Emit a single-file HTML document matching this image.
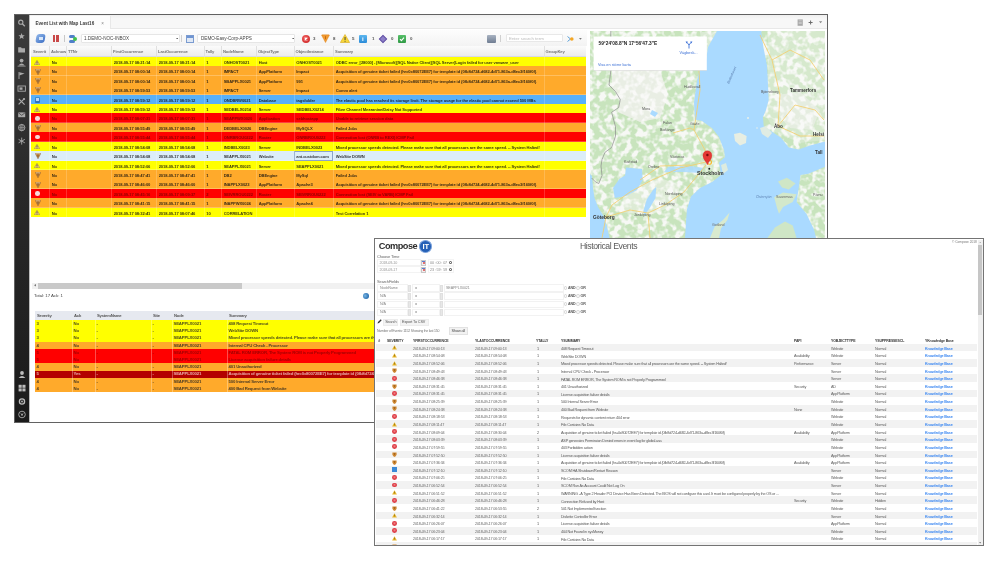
<!DOCTYPE html><html><head><meta charset="utf-8"><title>Event List</title><style>
*{box-sizing:border-box;margin:0;padding:0}
html,body{width:999px;height:564px;overflow:hidden;background:#fff}
body{position:relative;font-family:"Liberation Sans",sans-serif;color:#000}
.ab{position:absolute}
.t{position:absolute;white-space:nowrap;line-height:1}
</style></head><body><div id="root" style="position:absolute;left:0;top:0;width:999px;height:564px;overflow:hidden;will-change:transform;background:#fff">
<div class="ab" style="left:13.8px;top:13.8px;width:814.4px;height:409.4px;border:1.5px solid #626262;background:#fff"></div>
<div class="ab" style="left:15px;top:15px;width:14px;height:407px;background:linear-gradient(#3c3c3c,#2a2a2a 40%,#1b1b1b)"></div>
<div class="ab" style="left:29px;top:15px;width:1px;height:407px;background:#bdbdbd"></div>
<div class="ab" style="left:30px;top:15.3px;width:797px;height:13.4px;background:linear-gradient(#efefef,#f7f7f7 30%);border-bottom:1px solid #e8e8e8"></div>
<div class="ab" style="left:30px;top:16px;width:81px;height:12.5px;background:#fdfdfd;border-right:1px solid #e8e8e8"></div>
<div class="t" style="left:35.5px;top:21.8px;font-size:4.6px;font-weight:bold;color:#3a3a3a">Event List with Map Last16</div>
<div class="t" style="left:101.2px;top:22px;font-size:4.6px;color:#888">×</div>
<svg class="ab" style="left:797px;top:19px" width="28" height="8" viewBox="797 19 28 8"><rect x="797.6" y="19.4" width="5.2" height="6.4" fill="#a8a8a8"/><rect x="798.6" y="20.6" width="3.2" height="0.6" fill="#d8d8d8"/><rect x="798.6" y="22" width="3.2" height="0.6" fill="#d8d8d8"/><rect x="798.6" y="23.4" width="3.2" height="0.6" fill="#d8d8d8"/><path d="M808.6 22.5 H812.6 M810.6 20.5 V24.5" stroke="#6a6a6a" stroke-width="1"/><path d="M819 21.3 H822.2 L820.6 23.2 Z" fill="#8a8a8a"/></svg>
<div class="ab" style="left:30px;top:30px;width:557px;height:16px;background:linear-gradient(#fdfdfd,#f3f3f3)"></div>
<div class="ab" style="left:36px;top:34px;width:9px;height:9px;border-radius:3px;background:linear-gradient(135deg,#8fb6ea,#3d6fc4);transform:skewX(-10deg)"></div>
<div class="ab" style="left:39px;top:36.5px;width:4px;height:3px;background:#d7e6f8"></div>
<div class="ab" style="left:52.5px;top:35px;width:2.6px;height:7px;background:#c94848"></div>
<div class="ab" style="left:56px;top:35px;width:2.6px;height:7px;background:#c94848"></div>
<div class="ab" style="left:64px;top:35px;width:1px;height:7px;background:#c8c8c8"></div>
<div class="ab" style="left:69px;top:35px;width:6px;height:2.5px;border-radius:2px;background:#4f7fc9"></div>
<div class="ab" style="left:69px;top:40px;width:6px;height:2.5px;border-radius:2px;background:#4f7fc9"></div>
<div class="ab" style="left:73px;top:37px;width:4px;height:4px;border-radius:50%;background:#3fc04a"></div>
<div class="ab" style="left:80.5px;top:34px;width:99px;height:9px;background:#fff;border:1px solid #e6e6e6;border-radius:1px"></div>
<div class="t" style="left:84px;top:36.6px;font-size:4.6px;color:#444">1.DEMO-NOC-INBOX</div>
<svg class="ab" style="left:175.5px;top:37.8px" width="2.6" height="1.6" viewBox="0 0 2.6 1.6"><path d="M0 0 H2.6 L1.3 1.6 Z" fill="#666"/></svg>
<div class="ab" style="left:181px;top:35px;width:1px;height:7px;background:#d0d0d0"></div>
<div class="ab" style="left:186px;top:34.5px;width:8px;height:8px;background:linear-gradient(#6f95d3 0 2px,#dfe8f5 2px);border:1px solid #7a9bd0"></div>
<div class="ab" style="left:197px;top:34px;width:98px;height:9px;background:#fff;border:1px solid #e6e6e6;border-radius:1px"></div>
<div class="t" style="left:201px;top:36.6px;font-size:4.6px;color:#444">DEMO-Easy-Corp-APPS</div>
<svg class="ab" style="left:291.5px;top:37.8px" width="2.6" height="1.6" viewBox="0 0 2.6 1.6"><path d="M0 0 H2.6 L1.3 1.6 Z" fill="#666"/></svg>
<div class="ab" style="left:302px;top:34.5px;width:8px;height:8px;border-radius:50%;background:radial-gradient(circle at 40% 35%,#f26060,#c71c1c)"></div><svg class="ab" style="left:302px;top:34.5px" width="8" height="8" viewBox="0 0 8 8"><path d="M2.7 2.7 L5.3 5.3 M5.3 2.7 L2.7 5.3" stroke="#fff" stroke-width="1.2" fill="none"/></svg>
<div class="t" style="left:313px;top:37px;font-size:4.4px;font-weight:bold;color:#555">3</div>
<svg class="ab" style="left:321px;top:34px" width="9" height="9" viewBox="0 0 9 9"><path d="M1 0.8 H8 Q8.4 0.8 8.3 1.4 L4.5 8.6 L0.7 1.4 Q0.6 0.8 1 0.8 Z" fill="#f29a30" stroke="#d9801a" stroke-width="0.4"/><rect x="4.1" y="2.2" width="0.8" height="3" fill="#b8600a"/></svg>
<div class="t" style="left:333px;top:37px;font-size:4.4px;font-weight:bold;color:#555">8</div>
<svg class="ab" style="left:340px;top:34px" width="10" height="9" viewBox="0 0 10 9"><path d="M5 0.5 L9.6 8.5 H0.4 Z" fill="#f8d73a" stroke="#d9a914" stroke-width="0.6"/><rect x="4.6" y="3" width="0.9" height="3" fill="#333"/><rect x="4.6" y="6.8" width="0.9" height="0.9" fill="#333"/></svg>
<div class="t" style="left:352px;top:37px;font-size:4.4px;font-weight:bold;color:#555">5</div>
<div class="ab" style="left:359px;top:34.5px;width:8px;height:8px;background:linear-gradient(#5db7ef,#2a8bd8);border-radius:1px"></div><div class="t" style="left:362px;top:35.5px;font-size:6px;font-weight:bold;color:#fff">i</div>
<div class="t" style="left:372px;top:37px;font-size:4.4px;font-weight:bold;color:#555">1</div>
<div class="ab" style="left:380px;top:35.5px;width:6px;height:6px;background:#8d7fc9;transform:rotate(45deg);border:0.6px solid #6a5aa8"></div>
<div class="t" style="left:391px;top:37px;font-size:4.4px;font-weight:bold;color:#555">0</div>
<div class="ab" style="left:398px;top:34.5px;width:8px;height:8px;background:linear-gradient(#58c06a,#2f9a45);border-radius:1px"></div><svg class="ab" style="left:398px;top:34.5px" width="8" height="8" viewBox="0 0 8 8"><path d="M2 4.2 L3.4 5.6 L6 2.6" fill="none" stroke="#fff" stroke-width="1.1"/></svg>
<div class="t" style="left:410px;top:37px;font-size:4.4px;font-weight:bold;color:#555">0</div>
<div class="ab" style="left:487px;top:34.5px;width:9px;height:8px;background:linear-gradient(#a9b3c2,#6f7d92);border-radius:1px"></div>
<div class="ab" style="left:500px;top:35px;width:1px;height:7px;background:#d0d0d0"></div>
<div class="ab" style="left:506px;top:34.4px;width:57px;height:8px;background:#fff;border:1px solid #e8e8e8;border-radius:1px"></div>
<div class="t" style="left:509px;top:36.6px;font-size:4.4px;color:#bbb">Enter search term</div>
<svg class="ab" style="left:567px;top:34.5px" width="7" height="8" viewBox="0 0 7 8"><path d="M0.5 1.5 L3.5 4 L0.5 6.5" fill="none" stroke="#5ba0d8" stroke-width="1"/><circle cx="4.8" cy="4" r="1.8" fill="#f5a623"/></svg>
<svg class="ab" style="left:579px;top:37.8px" width="2.8" height="1.8" viewBox="0 0 2.8 1.8"><path d="M0 0 H2.8 L1.4 1.8 Z" fill="#777"/></svg>
<div class="ab" style="left:31px;top:46px;width:555px;height:11px;background:linear-gradient(#fbfbfb,#ececec);border-bottom:1px solid #d9d9e6"></div>
<div class="t" style="left:33px;top:50.1px;font-size:4.2px;font-weight:bold;letter-spacing:-0.15px;color:#555;opacity:0.8">Severit</div>
<div class="t" style="left:51px;top:50.1px;font-size:4.2px;font-weight:bold;letter-spacing:-0.15px;color:#555;opacity:0.8">Acknow</div>
<div class="ab" style="left:49px;top:46px;width:1px;height:11px;background:#e0e0e0"></div>
<div class="t" style="left:68px;top:50.1px;font-size:4.2px;font-weight:bold;letter-spacing:-0.15px;color:#555;opacity:0.8">TTNr</div>
<div class="ab" style="left:66px;top:46px;width:1px;height:11px;background:#e0e0e0"></div>
<div class="t" style="left:113px;top:50.1px;font-size:4.2px;font-weight:bold;letter-spacing:-0.15px;color:#555;opacity:0.8">FirstOccurrence</div>
<div class="ab" style="left:111px;top:46px;width:1px;height:11px;background:#e0e0e0"></div>
<div class="t" style="left:158px;top:50.1px;font-size:4.2px;font-weight:bold;letter-spacing:-0.15px;color:#555;opacity:0.8">LastOccurrence</div>
<div class="ab" style="left:156px;top:46px;width:1px;height:11px;background:#e0e0e0"></div>
<div class="t" style="left:205.6px;top:50.1px;font-size:4.2px;font-weight:bold;letter-spacing:-0.15px;color:#555;opacity:0.8">Tally</div>
<div class="ab" style="left:203.6px;top:46px;width:1px;height:11px;background:#e0e0e0"></div>
<div class="t" style="left:223px;top:50.1px;font-size:4.2px;font-weight:bold;letter-spacing:-0.15px;color:#555;opacity:0.8">NodeName</div>
<div class="ab" style="left:221px;top:46px;width:1px;height:11px;background:#e0e0e0"></div>
<div class="t" style="left:258px;top:50.1px;font-size:4.2px;font-weight:bold;letter-spacing:-0.15px;color:#555;opacity:0.8">ObjectType</div>
<div class="ab" style="left:256px;top:46px;width:1px;height:11px;background:#e0e0e0"></div>
<div class="t" style="left:295.6px;top:50.1px;font-size:4.2px;font-weight:bold;letter-spacing:-0.15px;color:#555;opacity:0.8">ObjectInstance</div>
<div class="ab" style="left:293.6px;top:46px;width:1px;height:11px;background:#e0e0e0"></div>
<div class="t" style="left:335px;top:50.1px;font-size:4.2px;font-weight:bold;letter-spacing:-0.15px;color:#555;opacity:0.8">Summary</div>
<div class="ab" style="left:333px;top:46px;width:1px;height:11px;background:#e0e0e0"></div>
<div class="t" style="left:545.6px;top:50.1px;font-size:4.2px;font-weight:bold;letter-spacing:-0.15px;color:#555;opacity:0.8">GroupKey</div>
<div class="ab" style="left:543.6px;top:46px;width:1px;height:11px;background:#e0e0e0"></div>
<div class="ab" style="left:31px;top:57.00px;width:555px;height:9.41px;background:#ffff00"></div>
<div class="ab" style="left:31px;top:65.91px;width:555px;height:0.5px;background:rgba(255,255,255,0.25)"></div>
<svg class="ab" style="left:34.4px;top:59.5px" width="6" height="5" viewBox="0 0 6 5"><path d="M3 0.3 L5.7 4.7 H0.3 Z" fill="#e9cf86" stroke="#8d7440" stroke-width="0.45"/><rect x="2.65" y="1.5" width="0.7" height="1.9" fill="#4a3510"/><rect x="2.65" y="3.8" width="0.7" height="0.6" fill="#4a3510"/></svg>
<div class="t" style="left:51.7px;top:59.98px;line-height:1.4;font-size:4.1px;font-weight:bold;letter-spacing:-0.1px;color:#111;opacity:0.85;width:14px;overflow:hidden">No</div>
<div class="t" style="left:113.7px;top:59.98px;line-height:1.4;font-size:4.1px;font-weight:bold;letter-spacing:-0.1px;color:#111;opacity:0.85;width:42px;overflow:hidden">2018-09-17 08:21:14</div>
<div class="t" style="left:158.7px;top:59.98px;line-height:1.4;font-size:4.1px;font-weight:bold;letter-spacing:-0.1px;color:#111;opacity:0.85;width:44.599999999999994px;overflow:hidden">2018-09-17 08:21:14</div>
<div class="t" style="left:206.29999999999998px;top:59.98px;line-height:1.4;font-size:4.1px;font-weight:bold;letter-spacing:-0.1px;color:#111;opacity:0.85;width:14.400000000000006px;overflow:hidden">1</div>
<div class="t" style="left:223.7px;top:59.98px;line-height:1.4;font-size:4.1px;font-weight:bold;letter-spacing:-0.1px;color:#111;opacity:0.85;width:32px;overflow:hidden">ONHOST0021</div>
<div class="t" style="left:258.7px;top:59.98px;line-height:1.4;font-size:4.1px;font-weight:bold;letter-spacing:-0.1px;color:#111;opacity:0.85;width:34.60000000000002px;overflow:hidden">Host</div>
<div class="t" style="left:296.3px;top:59.98px;line-height:1.4;font-size:4.1px;font-weight:bold;letter-spacing:-0.1px;color:#111;opacity:0.85;width:36.39999999999998px;overflow:hidden">ONHOST0021</div>
<div class="t" style="left:335.7px;top:59.98px;line-height:1.4;font-size:4.1px;font-weight:bold;letter-spacing:-0.1px;color:#111;opacity:0.85;width:207.60000000000002px;overflow:hidden">ODBC error_[28000] - [Microsoft][SQL Native Client][SQL Server]Login failed for user vmware_user</div>
<div class="ab" style="left:31px;top:66.41px;width:555px;height:9.41px;background:#ffaa2b"></div>
<div class="ab" style="left:31px;top:75.32px;width:555px;height:0.5px;background:rgba(255,255,255,0.25)"></div>
<svg class="ab" style="left:34.5px;top:68.61176470588235px" width="6" height="6" viewBox="0 0 6 6"><path d="M0.3 0.5 H5.7 L3 5.7 Z" fill="#d99a52" stroke="#6e4320" stroke-width="0.45"/><rect x="2.65" y="1.3" width="0.7" height="2.4" fill="#3e2408"/><path d="M0.7 0.7 H5.3" stroke="#fbe6c8" stroke-width="0.5"/></svg>
<div class="t" style="left:51.7px;top:69.39px;line-height:1.4;font-size:4.1px;font-weight:bold;letter-spacing:-0.1px;color:#111;opacity:0.85;width:14px;overflow:hidden">No</div>
<div class="t" style="left:113.7px;top:69.39px;line-height:1.4;font-size:4.1px;font-weight:bold;letter-spacing:-0.1px;color:#111;opacity:0.85;width:42px;overflow:hidden">2018-09-17 08:00:14</div>
<div class="t" style="left:158.7px;top:69.39px;line-height:1.4;font-size:4.1px;font-weight:bold;letter-spacing:-0.1px;color:#111;opacity:0.85;width:44.599999999999994px;overflow:hidden">2018-09-17 08:00:14</div>
<div class="t" style="left:206.29999999999998px;top:69.39px;line-height:1.4;font-size:4.1px;font-weight:bold;letter-spacing:-0.1px;color:#111;opacity:0.85;width:14.400000000000006px;overflow:hidden">1</div>
<div class="t" style="left:223.7px;top:69.39px;line-height:1.4;font-size:4.1px;font-weight:bold;letter-spacing:-0.1px;color:#111;opacity:0.85;width:32px;overflow:hidden">IMPACT</div>
<div class="t" style="left:258.7px;top:69.39px;line-height:1.4;font-size:4.1px;font-weight:bold;letter-spacing:-0.1px;color:#111;opacity:0.85;width:34.60000000000002px;overflow:hidden">AppPlatform</div>
<div class="t" style="left:296.3px;top:69.39px;line-height:1.4;font-size:4.1px;font-weight:bold;letter-spacing:-0.1px;color:#111;opacity:0.85;width:36.39999999999998px;overflow:hidden">Impact</div>
<div class="t" style="left:335.7px;top:69.39px;line-height:1.4;font-size:4.1px;font-weight:bold;letter-spacing:-0.1px;color:#111;opacity:0.85;width:207.60000000000002px;overflow:hidden">Acquisition of genuine ticket failed (hr=0x80072EE7) for template id {0fb8d724-d682-4d71-863a-d8ec3f160f0f}</div>
<div class="ab" style="left:31px;top:75.82px;width:555px;height:9.41px;background:#ffaa2b"></div>
<div class="ab" style="left:31px;top:84.74px;width:555px;height:0.5px;background:rgba(255,255,255,0.25)"></div>
<svg class="ab" style="left:34.5px;top:78.02352941176471px" width="6" height="6" viewBox="0 0 6 6"><path d="M0.3 0.5 H5.7 L3 5.7 Z" fill="#d99a52" stroke="#6e4320" stroke-width="0.45"/><rect x="2.65" y="1.3" width="0.7" height="2.4" fill="#3e2408"/><path d="M0.7 0.7 H5.3" stroke="#fbe6c8" stroke-width="0.5"/></svg>
<div class="t" style="left:51.7px;top:78.80px;line-height:1.4;font-size:4.1px;font-weight:bold;letter-spacing:-0.1px;color:#111;opacity:0.85;width:14px;overflow:hidden">No</div>
<div class="t" style="left:113.7px;top:78.80px;line-height:1.4;font-size:4.1px;font-weight:bold;letter-spacing:-0.1px;color:#111;opacity:0.85;width:42px;overflow:hidden">2018-09-17 08:00:14</div>
<div class="t" style="left:158.7px;top:78.80px;line-height:1.4;font-size:4.1px;font-weight:bold;letter-spacing:-0.1px;color:#111;opacity:0.85;width:44.599999999999994px;overflow:hidden">2018-09-17 08:00:14</div>
<div class="t" style="left:206.29999999999998px;top:78.80px;line-height:1.4;font-size:4.1px;font-weight:bold;letter-spacing:-0.1px;color:#111;opacity:0.85;width:14.400000000000006px;overflow:hidden">1</div>
<div class="t" style="left:223.7px;top:78.80px;line-height:1.4;font-size:4.1px;font-weight:bold;letter-spacing:-0.1px;color:#111;opacity:0.85;width:32px;overflow:hidden">SBAPPLX0021</div>
<div class="t" style="left:258.7px;top:78.80px;line-height:1.4;font-size:4.1px;font-weight:bold;letter-spacing:-0.1px;color:#111;opacity:0.85;width:34.60000000000002px;overflow:hidden">AppPlatform</div>
<div class="t" style="left:296.3px;top:78.80px;line-height:1.4;font-size:4.1px;font-weight:bold;letter-spacing:-0.1px;color:#111;opacity:0.85;width:36.39999999999998px;overflow:hidden">991</div>
<div class="t" style="left:335.7px;top:78.80px;line-height:1.4;font-size:4.1px;font-weight:bold;letter-spacing:-0.1px;color:#111;opacity:0.85;width:207.60000000000002px;overflow:hidden">Acquisition of genuine ticket failed (hr=0x80072EE7) for template id {0fb8d724-d682-4d71-863a-d8ec3f160f0f}</div>
<div class="ab" style="left:31px;top:85.24px;width:555px;height:9.41px;background:#ffaa2b"></div>
<div class="ab" style="left:31px;top:94.15px;width:555px;height:0.5px;background:rgba(255,255,255,0.25)"></div>
<svg class="ab" style="left:34.5px;top:87.43529411764706px" width="6" height="6" viewBox="0 0 6 6"><path d="M0.3 0.5 H5.7 L3 5.7 Z" fill="#d99a52" stroke="#6e4320" stroke-width="0.45"/><rect x="2.65" y="1.3" width="0.7" height="2.4" fill="#3e2408"/><path d="M0.7 0.7 H5.3" stroke="#fbe6c8" stroke-width="0.5"/></svg>
<div class="t" style="left:51.7px;top:88.22px;line-height:1.4;font-size:4.1px;font-weight:bold;letter-spacing:-0.1px;color:#111;opacity:0.85;width:14px;overflow:hidden">No</div>
<div class="t" style="left:113.7px;top:88.22px;line-height:1.4;font-size:4.1px;font-weight:bold;letter-spacing:-0.1px;color:#111;opacity:0.85;width:42px;overflow:hidden">2018-09-17 08:59:53</div>
<div class="t" style="left:158.7px;top:88.22px;line-height:1.4;font-size:4.1px;font-weight:bold;letter-spacing:-0.1px;color:#111;opacity:0.85;width:44.599999999999994px;overflow:hidden">2018-09-17 08:59:53</div>
<div class="t" style="left:206.29999999999998px;top:88.22px;line-height:1.4;font-size:4.1px;font-weight:bold;letter-spacing:-0.1px;color:#111;opacity:0.85;width:14.400000000000006px;overflow:hidden">1</div>
<div class="t" style="left:223.7px;top:88.22px;line-height:1.4;font-size:4.1px;font-weight:bold;letter-spacing:-0.1px;color:#111;opacity:0.85;width:32px;overflow:hidden">IMPACT</div>
<div class="t" style="left:258.7px;top:88.22px;line-height:1.4;font-size:4.1px;font-weight:bold;letter-spacing:-0.1px;color:#111;opacity:0.85;width:34.60000000000002px;overflow:hidden">Server</div>
<div class="t" style="left:296.3px;top:88.22px;line-height:1.4;font-size:4.1px;font-weight:bold;letter-spacing:-0.1px;color:#111;opacity:0.85;width:36.39999999999998px;overflow:hidden">Impact</div>
<div class="t" style="left:335.7px;top:88.22px;line-height:1.4;font-size:4.1px;font-weight:bold;letter-spacing:-0.1px;color:#111;opacity:0.85;width:207.60000000000002px;overflow:hidden">Comm alert</div>
<div class="ab" style="left:31px;top:94.65px;width:555px;height:9.41px;background:#58b0f8"></div>
<div class="ab" style="left:31px;top:103.56px;width:555px;height:0.5px;background:rgba(255,255,255,0.25)"></div>
<div class="ab" style="left:34.8px;top:96.54705882352943px;width:5.6px;height:6px;background:linear-gradient(#3f8fd6,#2c6db5);border-radius:1px"></div><div class="ab" style="left:36.2px;top:97.84705882352942px;width:2.6px;height:3.2px;background:#bcd8f2"></div>
<div class="t" style="left:51.7px;top:97.63px;line-height:1.4;font-size:4.1px;font-weight:bold;letter-spacing:-0.1px;color:#111;opacity:0.85;width:14px;overflow:hidden">No</div>
<div class="t" style="left:113.7px;top:97.63px;line-height:1.4;font-size:4.1px;font-weight:bold;letter-spacing:-0.1px;color:#111;opacity:0.85;width:42px;overflow:hidden">2018-09-17 08:59:12</div>
<div class="t" style="left:158.7px;top:97.63px;line-height:1.4;font-size:4.1px;font-weight:bold;letter-spacing:-0.1px;color:#111;opacity:0.85;width:44.599999999999994px;overflow:hidden">2018-09-17 08:59:12</div>
<div class="t" style="left:206.29999999999998px;top:97.63px;line-height:1.4;font-size:4.1px;font-weight:bold;letter-spacing:-0.1px;color:#111;opacity:0.85;width:14.400000000000006px;overflow:hidden">1</div>
<div class="t" style="left:223.7px;top:97.63px;line-height:1.4;font-size:4.1px;font-weight:bold;letter-spacing:-0.1px;color:#111;opacity:0.85;width:32px;overflow:hidden">ONDBRW0021</div>
<div class="t" style="left:258.7px;top:97.63px;line-height:1.4;font-size:4.1px;font-weight:bold;letter-spacing:-0.1px;color:#111;opacity:0.85;width:34.60000000000002px;overflow:hidden">Database</div>
<div class="t" style="left:296.3px;top:97.63px;line-height:1.4;font-size:4.1px;font-weight:bold;letter-spacing:-0.1px;color:#111;opacity:0.85;width:36.39999999999998px;overflow:hidden">tagsfolder</div>
<div class="t" style="left:335.7px;top:97.63px;line-height:1.4;font-size:4.1px;font-weight:bold;letter-spacing:-0.1px;color:#111;opacity:0.85;width:207.60000000000002px;overflow:hidden">The elastic pool has reached its storage limit. The storage usage for the elastic pool cannot exceed 500 MBs</div>
<div class="ab" style="left:31px;top:104.06px;width:555px;height:9.41px;background:#ffff00"></div>
<div class="ab" style="left:31px;top:112.97px;width:555px;height:0.5px;background:rgba(255,255,255,0.25)"></div>
<svg class="ab" style="left:34.4px;top:106.55882352941177px" width="6" height="5" viewBox="0 0 6 5"><path d="M3 0.3 L5.7 4.7 H0.3 Z" fill="#e9cf86" stroke="#8d7440" stroke-width="0.45"/><rect x="2.65" y="1.5" width="0.7" height="1.9" fill="#4a3510"/><rect x="2.65" y="3.8" width="0.7" height="0.6" fill="#4a3510"/></svg>
<div class="t" style="left:51.7px;top:107.04px;line-height:1.4;font-size:4.1px;font-weight:bold;letter-spacing:-0.1px;color:#111;opacity:0.85;width:14px;overflow:hidden">No</div>
<div class="t" style="left:113.7px;top:107.04px;line-height:1.4;font-size:4.1px;font-weight:bold;letter-spacing:-0.1px;color:#111;opacity:0.85;width:42px;overflow:hidden">2018-09-17 08:59:12</div>
<div class="t" style="left:158.7px;top:107.04px;line-height:1.4;font-size:4.1px;font-weight:bold;letter-spacing:-0.1px;color:#111;opacity:0.85;width:44.599999999999994px;overflow:hidden">2018-09-17 08:59:12</div>
<div class="t" style="left:206.29999999999998px;top:107.04px;line-height:1.4;font-size:4.1px;font-weight:bold;letter-spacing:-0.1px;color:#111;opacity:0.85;width:14.400000000000006px;overflow:hidden">1</div>
<div class="t" style="left:223.7px;top:107.04px;line-height:1.4;font-size:4.1px;font-weight:bold;letter-spacing:-0.1px;color:#111;opacity:0.85;width:32px;overflow:hidden">SEDBELX0214</div>
<div class="t" style="left:258.7px;top:107.04px;line-height:1.4;font-size:4.1px;font-weight:bold;letter-spacing:-0.1px;color:#111;opacity:0.85;width:34.60000000000002px;overflow:hidden">Server</div>
<div class="t" style="left:296.3px;top:107.04px;line-height:1.4;font-size:4.1px;font-weight:bold;letter-spacing:-0.1px;color:#111;opacity:0.85;width:36.39999999999998px;overflow:hidden">SEDBELX0214</div>
<div class="t" style="left:335.7px;top:107.04px;line-height:1.4;font-size:4.1px;font-weight:bold;letter-spacing:-0.1px;color:#111;opacity:0.85;width:207.60000000000002px;overflow:hidden">Fibre Channel Mezzanine/Daisy Not Supported</div>
<div class="ab" style="left:31px;top:113.47px;width:555px;height:9.41px;background:#ff0000"></div>
<div class="ab" style="left:31px;top:122.38px;width:555px;height:0.5px;background:rgba(255,255,255,0.25)"></div>
<div class="ab" style="left:35.3px;top:115.97058823529412px;width:4.6px;height:4.6px;border-radius:50%;background:#f6dada"></div>
<div class="t" style="left:51.7px;top:116.45px;line-height:1.4;font-size:4.1px;font-weight:bold;letter-spacing:-0.1px;color:#7a0000;opacity:0.85;width:14px;overflow:hidden">No</div>
<div class="t" style="left:113.7px;top:116.45px;line-height:1.4;font-size:4.1px;font-weight:bold;letter-spacing:-0.1px;color:#7a0000;opacity:0.85;width:42px;overflow:hidden">2018-09-17 08:07:31</div>
<div class="t" style="left:158.7px;top:116.45px;line-height:1.4;font-size:4.1px;font-weight:bold;letter-spacing:-0.1px;color:#7a0000;opacity:0.85;width:44.599999999999994px;overflow:hidden">2018-09-17 08:07:31</div>
<div class="t" style="left:206.29999999999998px;top:116.45px;line-height:1.4;font-size:4.1px;font-weight:bold;letter-spacing:-0.1px;color:#7a0000;opacity:0.85;width:14.400000000000006px;overflow:hidden">1</div>
<div class="t" style="left:223.7px;top:116.45px;line-height:1.4;font-size:4.1px;font-weight:bold;letter-spacing:-0.1px;color:#7a0000;opacity:0.85;width:32px;overflow:hidden">SEAPPWX0020</div>
<div class="t" style="left:258.7px;top:116.45px;line-height:1.4;font-size:4.1px;font-weight:bold;letter-spacing:-0.1px;color:#7a0000;opacity:0.85;width:34.60000000000002px;overflow:hidden">Application</div>
<div class="t" style="left:296.3px;top:116.45px;line-height:1.4;font-size:4.1px;font-weight:bold;letter-spacing:-0.1px;color:#7a0000;opacity:0.85;width:36.39999999999998px;overflow:hidden">sebhostapp</div>
<div class="t" style="left:335.7px;top:116.45px;line-height:1.4;font-size:4.1px;font-weight:bold;letter-spacing:-0.1px;color:#7a0000;opacity:0.85;width:207.60000000000002px;overflow:hidden">Unable to retrieve session data</div>
<div class="ab" style="left:31px;top:122.88px;width:555px;height:9.41px;background:#ffaa2b"></div>
<div class="ab" style="left:31px;top:131.79px;width:555px;height:0.5px;background:rgba(255,255,255,0.25)"></div>
<svg class="ab" style="left:34.5px;top:125.08235294117648px" width="6" height="6" viewBox="0 0 6 6"><path d="M0.3 0.5 H5.7 L3 5.7 Z" fill="#d99a52" stroke="#6e4320" stroke-width="0.45"/><rect x="2.65" y="1.3" width="0.7" height="2.4" fill="#3e2408"/><path d="M0.7 0.7 H5.3" stroke="#fbe6c8" stroke-width="0.5"/></svg>
<div class="t" style="left:51.7px;top:125.86px;line-height:1.4;font-size:4.1px;font-weight:bold;letter-spacing:-0.1px;color:#111;opacity:0.85;width:14px;overflow:hidden">No</div>
<div class="t" style="left:113.7px;top:125.86px;line-height:1.4;font-size:4.1px;font-weight:bold;letter-spacing:-0.1px;color:#111;opacity:0.85;width:42px;overflow:hidden">2018-09-17 08:55:49</div>
<div class="t" style="left:158.7px;top:125.86px;line-height:1.4;font-size:4.1px;font-weight:bold;letter-spacing:-0.1px;color:#111;opacity:0.85;width:44.599999999999994px;overflow:hidden">2018-09-17 08:55:49</div>
<div class="t" style="left:206.29999999999998px;top:125.86px;line-height:1.4;font-size:4.1px;font-weight:bold;letter-spacing:-0.1px;color:#111;opacity:0.85;width:14.400000000000006px;overflow:hidden">1</div>
<div class="t" style="left:223.7px;top:125.86px;line-height:1.4;font-size:4.1px;font-weight:bold;letter-spacing:-0.1px;color:#111;opacity:0.85;width:32px;overflow:hidden">DEDBELX0026</div>
<div class="t" style="left:258.7px;top:125.86px;line-height:1.4;font-size:4.1px;font-weight:bold;letter-spacing:-0.1px;color:#111;opacity:0.85;width:34.60000000000002px;overflow:hidden">DBEngine</div>
<div class="t" style="left:296.3px;top:125.86px;line-height:1.4;font-size:4.1px;font-weight:bold;letter-spacing:-0.1px;color:#111;opacity:0.85;width:36.39999999999998px;overflow:hidden">MySQLX</div>
<div class="t" style="left:335.7px;top:125.86px;line-height:1.4;font-size:4.1px;font-weight:bold;letter-spacing:-0.1px;color:#111;opacity:0.85;width:207.60000000000002px;overflow:hidden">Failed Jobs</div>
<div class="ab" style="left:31px;top:132.29px;width:555px;height:9.41px;background:#ff0000"></div>
<div class="ab" style="left:31px;top:141.21px;width:555px;height:0.5px;background:rgba(255,255,255,0.25)"></div>
<div class="ab" style="left:35.3px;top:134.79411764705884px;width:4.6px;height:4.6px;border-radius:50%;background:#f6dada"></div>
<div class="t" style="left:51.7px;top:135.27px;line-height:1.4;font-size:4.1px;font-weight:bold;letter-spacing:-0.1px;color:#7a0000;opacity:0.85;width:14px;overflow:hidden">No</div>
<div class="t" style="left:113.7px;top:135.27px;line-height:1.4;font-size:4.1px;font-weight:bold;letter-spacing:-0.1px;color:#7a0000;opacity:0.85;width:42px;overflow:hidden">2018-09-17 08:55:44</div>
<div class="t" style="left:158.7px;top:135.27px;line-height:1.4;font-size:4.1px;font-weight:bold;letter-spacing:-0.1px;color:#7a0000;opacity:0.85;width:44.599999999999994px;overflow:hidden">2018-09-17 08:55:44</div>
<div class="t" style="left:206.29999999999998px;top:135.27px;line-height:1.4;font-size:4.1px;font-weight:bold;letter-spacing:-0.1px;color:#7a0000;opacity:0.85;width:14.400000000000006px;overflow:hidden">1</div>
<div class="t" style="left:223.7px;top:135.27px;line-height:1.4;font-size:4.1px;font-weight:bold;letter-spacing:-0.1px;color:#7a0000;opacity:0.85;width:32px;overflow:hidden">ONRBROU0222</div>
<div class="t" style="left:258.7px;top:135.27px;line-height:1.4;font-size:4.1px;font-weight:bold;letter-spacing:-0.1px;color:#7a0000;opacity:0.85;width:34.60000000000002px;overflow:hidden">Router</div>
<div class="t" style="left:296.3px;top:135.27px;line-height:1.4;font-size:4.1px;font-weight:bold;letter-spacing:-0.1px;color:#7a0000;opacity:0.85;width:36.39999999999998px;overflow:hidden">ONRBROU0222</div>
<div class="t" style="left:335.7px;top:135.27px;line-height:1.4;font-size:4.1px;font-weight:bold;letter-spacing:-0.1px;color:#7a0000;opacity:0.85;width:207.60000000000002px;overflow:hidden">Connection lost (ONRB to REXI) ICMP Fail</div>
<div class="ab" style="left:31px;top:141.71px;width:555px;height:9.41px;background:#ffff00"></div>
<div class="ab" style="left:31px;top:150.62px;width:555px;height:0.5px;background:rgba(255,255,255,0.25)"></div>
<svg class="ab" style="left:34.4px;top:144.20588235294116px" width="6" height="5" viewBox="0 0 6 5"><path d="M3 0.3 L5.7 4.7 H0.3 Z" fill="#e9cf86" stroke="#8d7440" stroke-width="0.45"/><rect x="2.65" y="1.5" width="0.7" height="1.9" fill="#4a3510"/><rect x="2.65" y="3.8" width="0.7" height="0.6" fill="#4a3510"/></svg>
<div class="t" style="left:51.7px;top:144.69px;line-height:1.4;font-size:4.1px;font-weight:bold;letter-spacing:-0.1px;color:#111;opacity:0.85;width:14px;overflow:hidden">No</div>
<div class="t" style="left:113.7px;top:144.69px;line-height:1.4;font-size:4.1px;font-weight:bold;letter-spacing:-0.1px;color:#111;opacity:0.85;width:42px;overflow:hidden">2018-09-17 08:54:08</div>
<div class="t" style="left:158.7px;top:144.69px;line-height:1.4;font-size:4.1px;font-weight:bold;letter-spacing:-0.1px;color:#111;opacity:0.85;width:44.599999999999994px;overflow:hidden">2018-09-17 08:54:08</div>
<div class="t" style="left:206.29999999999998px;top:144.69px;line-height:1.4;font-size:4.1px;font-weight:bold;letter-spacing:-0.1px;color:#111;opacity:0.85;width:14.400000000000006px;overflow:hidden">1</div>
<div class="t" style="left:223.7px;top:144.69px;line-height:1.4;font-size:4.1px;font-weight:bold;letter-spacing:-0.1px;color:#111;opacity:0.85;width:32px;overflow:hidden">INDBELX0023</div>
<div class="t" style="left:258.7px;top:144.69px;line-height:1.4;font-size:4.1px;font-weight:bold;letter-spacing:-0.1px;color:#111;opacity:0.85;width:34.60000000000002px;overflow:hidden">Server</div>
<div class="t" style="left:296.3px;top:144.69px;line-height:1.4;font-size:4.1px;font-weight:bold;letter-spacing:-0.1px;color:#111;opacity:0.85;width:36.39999999999998px;overflow:hidden">INDBELX0023</div>
<div class="t" style="left:335.7px;top:144.69px;line-height:1.4;font-size:4.1px;font-weight:bold;letter-spacing:-0.1px;color:#111;opacity:0.85;width:207.60000000000002px;overflow:hidden">Mixed processor speeds detected. Please make sure that all processors are the same speed. -- System Halted!</div>
<div class="ab" style="left:31px;top:151.12px;width:555px;height:9.41px;background:#dcedf8"></div>
<div class="ab" style="left:31px;top:160.03px;width:555px;height:0.5px;background:rgba(255,255,255,0.25)"></div>
<svg class="ab" style="left:34.5px;top:153.31764705882355px" width="6" height="6" viewBox="0 0 6 6"><path d="M0.3 0.5 H5.7 L3 5.7 Z" fill="#d99a52" stroke="#6e4320" stroke-width="0.45"/><rect x="2.65" y="1.3" width="0.7" height="2.4" fill="#3e2408"/><path d="M0.7 0.7 H5.3" stroke="#fbe6c8" stroke-width="0.5"/></svg>
<div class="t" style="left:51.7px;top:154.10px;line-height:1.4;font-size:4.1px;font-weight:bold;letter-spacing:-0.1px;color:#111;opacity:0.85;width:14px;overflow:hidden">No</div>
<div class="t" style="left:113.7px;top:154.10px;line-height:1.4;font-size:4.1px;font-weight:bold;letter-spacing:-0.1px;color:#111;opacity:0.85;width:42px;overflow:hidden">2018-09-17 08:54:08</div>
<div class="t" style="left:158.7px;top:154.10px;line-height:1.4;font-size:4.1px;font-weight:bold;letter-spacing:-0.1px;color:#111;opacity:0.85;width:44.599999999999994px;overflow:hidden">2018-09-17 08:54:08</div>
<div class="t" style="left:206.29999999999998px;top:154.10px;line-height:1.4;font-size:4.1px;font-weight:bold;letter-spacing:-0.1px;color:#111;opacity:0.85;width:14.400000000000006px;overflow:hidden">1</div>
<div class="t" style="left:223.7px;top:154.10px;line-height:1.4;font-size:4.1px;font-weight:bold;letter-spacing:-0.1px;color:#111;opacity:0.85;width:32px;overflow:hidden">SEAPPLX0021</div>
<div class="t" style="left:258.7px;top:154.10px;line-height:1.4;font-size:4.1px;font-weight:bold;letter-spacing:-0.1px;color:#111;opacity:0.85;width:34.60000000000002px;overflow:hidden">Website</div>
<div class="t" style="left:296.3px;top:154.10px;line-height:1.4;font-size:4.1px;font-weight:bold;letter-spacing:-0.1px;color:#111;opacity:0.85;width:36.39999999999998px;overflow:hidden">ant.custdom.com</div>
<div class="t" style="left:335.7px;top:154.10px;line-height:1.4;font-size:4.1px;font-weight:bold;letter-spacing:-0.1px;color:#111;opacity:0.85;width:207.60000000000002px;overflow:hidden">WebSite DOWN</div>
<div class="ab" style="left:293.6px;top:151.12px;width:39.39999999999998px;height:9.41px;border:1px solid #8aa4c8"></div>
<div class="ab" style="left:31px;top:160.53px;width:555px;height:9.41px;background:#ffff00"></div>
<div class="ab" style="left:31px;top:169.44px;width:555px;height:0.5px;background:rgba(255,255,255,0.25)"></div>
<svg class="ab" style="left:34.4px;top:163.02941176470588px" width="6" height="5" viewBox="0 0 6 5"><path d="M3 0.3 L5.7 4.7 H0.3 Z" fill="#e9cf86" stroke="#8d7440" stroke-width="0.45"/><rect x="2.65" y="1.5" width="0.7" height="1.9" fill="#4a3510"/><rect x="2.65" y="3.8" width="0.7" height="0.6" fill="#4a3510"/></svg>
<div class="t" style="left:51.7px;top:163.51px;line-height:1.4;font-size:4.1px;font-weight:bold;letter-spacing:-0.1px;color:#111;opacity:0.85;width:14px;overflow:hidden">No</div>
<div class="t" style="left:113.7px;top:163.51px;line-height:1.4;font-size:4.1px;font-weight:bold;letter-spacing:-0.1px;color:#111;opacity:0.85;width:42px;overflow:hidden">2018-09-17 08:52:06</div>
<div class="t" style="left:158.7px;top:163.51px;line-height:1.4;font-size:4.1px;font-weight:bold;letter-spacing:-0.1px;color:#111;opacity:0.85;width:44.599999999999994px;overflow:hidden">2018-09-17 08:52:06</div>
<div class="t" style="left:206.29999999999998px;top:163.51px;line-height:1.4;font-size:4.1px;font-weight:bold;letter-spacing:-0.1px;color:#111;opacity:0.85;width:14.400000000000006px;overflow:hidden">1</div>
<div class="t" style="left:223.7px;top:163.51px;line-height:1.4;font-size:4.1px;font-weight:bold;letter-spacing:-0.1px;color:#111;opacity:0.85;width:32px;overflow:hidden">SEAPPLX0021</div>
<div class="t" style="left:258.7px;top:163.51px;line-height:1.4;font-size:4.1px;font-weight:bold;letter-spacing:-0.1px;color:#111;opacity:0.85;width:34.60000000000002px;overflow:hidden">Server</div>
<div class="t" style="left:296.3px;top:163.51px;line-height:1.4;font-size:4.1px;font-weight:bold;letter-spacing:-0.1px;color:#111;opacity:0.85;width:36.39999999999998px;overflow:hidden">SEAPPLX0021</div>
<div class="t" style="left:335.7px;top:163.51px;line-height:1.4;font-size:4.1px;font-weight:bold;letter-spacing:-0.1px;color:#111;opacity:0.85;width:207.60000000000002px;overflow:hidden">Mixed processor speeds detected. Please make sure that all processors are the same speed. -- System Halted!</div>
<div class="ab" style="left:31px;top:169.94px;width:555px;height:9.41px;background:#ffaa2b"></div>
<div class="ab" style="left:31px;top:178.85px;width:555px;height:0.5px;background:rgba(255,255,255,0.25)"></div>
<svg class="ab" style="left:34.5px;top:172.14117647058825px" width="6" height="6" viewBox="0 0 6 6"><path d="M0.3 0.5 H5.7 L3 5.7 Z" fill="#d99a52" stroke="#6e4320" stroke-width="0.45"/><rect x="2.65" y="1.3" width="0.7" height="2.4" fill="#3e2408"/><path d="M0.7 0.7 H5.3" stroke="#fbe6c8" stroke-width="0.5"/></svg>
<div class="t" style="left:51.7px;top:172.92px;line-height:1.4;font-size:4.1px;font-weight:bold;letter-spacing:-0.1px;color:#111;opacity:0.85;width:14px;overflow:hidden">No</div>
<div class="t" style="left:113.7px;top:172.92px;line-height:1.4;font-size:4.1px;font-weight:bold;letter-spacing:-0.1px;color:#111;opacity:0.85;width:42px;overflow:hidden">2018-09-17 08:47:41</div>
<div class="t" style="left:158.7px;top:172.92px;line-height:1.4;font-size:4.1px;font-weight:bold;letter-spacing:-0.1px;color:#111;opacity:0.85;width:44.599999999999994px;overflow:hidden">2018-09-17 08:47:41</div>
<div class="t" style="left:206.29999999999998px;top:172.92px;line-height:1.4;font-size:4.1px;font-weight:bold;letter-spacing:-0.1px;color:#111;opacity:0.85;width:14.400000000000006px;overflow:hidden">1</div>
<div class="t" style="left:223.7px;top:172.92px;line-height:1.4;font-size:4.1px;font-weight:bold;letter-spacing:-0.1px;color:#111;opacity:0.85;width:32px;overflow:hidden">DB2</div>
<div class="t" style="left:258.7px;top:172.92px;line-height:1.4;font-size:4.1px;font-weight:bold;letter-spacing:-0.1px;color:#111;opacity:0.85;width:34.60000000000002px;overflow:hidden">DBEngine</div>
<div class="t" style="left:296.3px;top:172.92px;line-height:1.4;font-size:4.1px;font-weight:bold;letter-spacing:-0.1px;color:#111;opacity:0.85;width:36.39999999999998px;overflow:hidden">MySql</div>
<div class="t" style="left:335.7px;top:172.92px;line-height:1.4;font-size:4.1px;font-weight:bold;letter-spacing:-0.1px;color:#111;opacity:0.85;width:207.60000000000002px;overflow:hidden">Failed Jobs</div>
<div class="ab" style="left:31px;top:179.35px;width:555px;height:9.41px;background:#ffaa2b"></div>
<div class="ab" style="left:31px;top:188.26px;width:555px;height:0.5px;background:rgba(255,255,255,0.25)"></div>
<svg class="ab" style="left:34.5px;top:181.55294117647063px" width="6" height="6" viewBox="0 0 6 6"><path d="M0.3 0.5 H5.7 L3 5.7 Z" fill="#d99a52" stroke="#6e4320" stroke-width="0.45"/><rect x="2.65" y="1.3" width="0.7" height="2.4" fill="#3e2408"/><path d="M0.7 0.7 H5.3" stroke="#fbe6c8" stroke-width="0.5"/></svg>
<div class="t" style="left:51.7px;top:182.33px;line-height:1.4;font-size:4.1px;font-weight:bold;letter-spacing:-0.1px;color:#111;opacity:0.85;width:14px;overflow:hidden">No</div>
<div class="t" style="left:113.7px;top:182.33px;line-height:1.4;font-size:4.1px;font-weight:bold;letter-spacing:-0.1px;color:#111;opacity:0.85;width:42px;overflow:hidden">2018-09-17 08:46:00</div>
<div class="t" style="left:158.7px;top:182.33px;line-height:1.4;font-size:4.1px;font-weight:bold;letter-spacing:-0.1px;color:#111;opacity:0.85;width:44.599999999999994px;overflow:hidden">2018-09-17 08:46:00</div>
<div class="t" style="left:206.29999999999998px;top:182.33px;line-height:1.4;font-size:4.1px;font-weight:bold;letter-spacing:-0.1px;color:#111;opacity:0.85;width:14.400000000000006px;overflow:hidden">1</div>
<div class="t" style="left:223.7px;top:182.33px;line-height:1.4;font-size:4.1px;font-weight:bold;letter-spacing:-0.1px;color:#111;opacity:0.85;width:32px;overflow:hidden">INAPPLX0023</div>
<div class="t" style="left:258.7px;top:182.33px;line-height:1.4;font-size:4.1px;font-weight:bold;letter-spacing:-0.1px;color:#111;opacity:0.85;width:34.60000000000002px;overflow:hidden">AppPlatform</div>
<div class="t" style="left:296.3px;top:182.33px;line-height:1.4;font-size:4.1px;font-weight:bold;letter-spacing:-0.1px;color:#111;opacity:0.85;width:36.39999999999998px;overflow:hidden">Apache3</div>
<div class="t" style="left:335.7px;top:182.33px;line-height:1.4;font-size:4.1px;font-weight:bold;letter-spacing:-0.1px;color:#111;opacity:0.85;width:207.60000000000002px;overflow:hidden">Acquisition of genuine ticket failed (hr=0x80072EE7) for template id {0fb8d724-d682-4d71-863a-d8ec3f160f0f}</div>
<div class="ab" style="left:31px;top:188.76px;width:555px;height:9.41px;background:#ff0000"></div>
<div class="ab" style="left:31px;top:197.68px;width:555px;height:0.5px;background:rgba(255,255,255,0.25)"></div>
<div class="ab" style="left:35.3px;top:191.26470588235296px;width:4.6px;height:4.6px;border-radius:50%;background:#f6dada"></div>
<div class="t" style="left:51.7px;top:191.74px;line-height:1.4;font-size:4.1px;font-weight:bold;letter-spacing:-0.1px;color:#7a0000;opacity:0.85;width:14px;overflow:hidden">No</div>
<div class="t" style="left:113.7px;top:191.74px;line-height:1.4;font-size:4.1px;font-weight:bold;letter-spacing:-0.1px;color:#7a0000;opacity:0.85;width:42px;overflow:hidden">2018-09-17 08:45:16</div>
<div class="t" style="left:158.7px;top:191.74px;line-height:1.4;font-size:4.1px;font-weight:bold;letter-spacing:-0.1px;color:#7a0000;opacity:0.85;width:44.599999999999994px;overflow:hidden">2018-09-17 08:09:37</div>
<div class="t" style="left:206.29999999999998px;top:191.74px;line-height:1.4;font-size:4.1px;font-weight:bold;letter-spacing:-0.1px;color:#7a0000;opacity:0.85;width:14.400000000000006px;overflow:hidden">2</div>
<div class="t" style="left:223.7px;top:191.74px;line-height:1.4;font-size:4.1px;font-weight:bold;letter-spacing:-0.1px;color:#7a0000;opacity:0.85;width:32px;overflow:hidden">SEIVRROU0222</div>
<div class="t" style="left:258.7px;top:191.74px;line-height:1.4;font-size:4.1px;font-weight:bold;letter-spacing:-0.1px;color:#7a0000;opacity:0.85;width:34.60000000000002px;overflow:hidden">Router</div>
<div class="t" style="left:296.3px;top:191.74px;line-height:1.4;font-size:4.1px;font-weight:bold;letter-spacing:-0.1px;color:#7a0000;opacity:0.85;width:36.39999999999998px;overflow:hidden">SEIVRROU0222</div>
<div class="t" style="left:335.7px;top:191.74px;line-height:1.4;font-size:4.1px;font-weight:bold;letter-spacing:-0.1px;color:#7a0000;opacity:0.85;width:207.60000000000002px;overflow:hidden">Connection lost (SEIV to VARB) ICMP Fail</div>
<div class="ab" style="left:31px;top:198.18px;width:555px;height:9.41px;background:#ffaa2b"></div>
<div class="ab" style="left:31px;top:207.09px;width:555px;height:0.5px;background:rgba(255,255,255,0.25)"></div>
<svg class="ab" style="left:34.5px;top:200.37647058823532px" width="6" height="6" viewBox="0 0 6 6"><path d="M0.3 0.5 H5.7 L3 5.7 Z" fill="#d99a52" stroke="#6e4320" stroke-width="0.45"/><rect x="2.65" y="1.3" width="0.7" height="2.4" fill="#3e2408"/><path d="M0.7 0.7 H5.3" stroke="#fbe6c8" stroke-width="0.5"/></svg>
<div class="t" style="left:51.7px;top:201.16px;line-height:1.4;font-size:4.1px;font-weight:bold;letter-spacing:-0.1px;color:#111;opacity:0.85;width:14px;overflow:hidden">No</div>
<div class="t" style="left:113.7px;top:201.16px;line-height:1.4;font-size:4.1px;font-weight:bold;letter-spacing:-0.1px;color:#111;opacity:0.85;width:42px;overflow:hidden">2018-09-17 08:41:15</div>
<div class="t" style="left:158.7px;top:201.16px;line-height:1.4;font-size:4.1px;font-weight:bold;letter-spacing:-0.1px;color:#111;opacity:0.85;width:44.599999999999994px;overflow:hidden">2018-09-17 08:41:15</div>
<div class="t" style="left:206.29999999999998px;top:201.16px;line-height:1.4;font-size:4.1px;font-weight:bold;letter-spacing:-0.1px;color:#111;opacity:0.85;width:14.400000000000006px;overflow:hidden">1</div>
<div class="t" style="left:223.7px;top:201.16px;line-height:1.4;font-size:4.1px;font-weight:bold;letter-spacing:-0.1px;color:#111;opacity:0.85;width:32px;overflow:hidden">INAPPWX0024</div>
<div class="t" style="left:258.7px;top:201.16px;line-height:1.4;font-size:4.1px;font-weight:bold;letter-spacing:-0.1px;color:#111;opacity:0.85;width:34.60000000000002px;overflow:hidden">AppPlatform</div>
<div class="t" style="left:296.3px;top:201.16px;line-height:1.4;font-size:4.1px;font-weight:bold;letter-spacing:-0.1px;color:#111;opacity:0.85;width:36.39999999999998px;overflow:hidden">Apache4</div>
<div class="t" style="left:335.7px;top:201.16px;line-height:1.4;font-size:4.1px;font-weight:bold;letter-spacing:-0.1px;color:#111;opacity:0.85;width:207.60000000000002px;overflow:hidden">Acquisition of genuine ticket failed (hr=0x80072EE7) for template id {0fb8d724-d682-4d71-863a-d8ec3f160f0f}</div>
<div class="ab" style="left:31px;top:207.59px;width:555px;height:9.41px;background:#ffff00"></div>
<div class="ab" style="left:31px;top:216.50px;width:555px;height:0.5px;background:rgba(255,255,255,0.25)"></div>
<svg class="ab" style="left:34.4px;top:210.08823529411765px" width="6" height="5" viewBox="0 0 6 5"><path d="M3 0.3 L5.7 4.7 H0.3 Z" fill="#e9cf86" stroke="#8d7440" stroke-width="0.45"/><rect x="2.65" y="1.5" width="0.7" height="1.9" fill="#4a3510"/><rect x="2.65" y="3.8" width="0.7" height="0.6" fill="#4a3510"/></svg>
<div class="t" style="left:51.7px;top:210.57px;line-height:1.4;font-size:4.1px;font-weight:bold;letter-spacing:-0.1px;color:#111;opacity:0.85;width:14px;overflow:hidden">No</div>
<div class="t" style="left:113.7px;top:210.57px;line-height:1.4;font-size:4.1px;font-weight:bold;letter-spacing:-0.1px;color:#111;opacity:0.85;width:42px;overflow:hidden">2018-09-17 08:32:41</div>
<div class="t" style="left:158.7px;top:210.57px;line-height:1.4;font-size:4.1px;font-weight:bold;letter-spacing:-0.1px;color:#111;opacity:0.85;width:44.599999999999994px;overflow:hidden">2018-09-17 08:07:46</div>
<div class="t" style="left:206.29999999999998px;top:210.57px;line-height:1.4;font-size:4.1px;font-weight:bold;letter-spacing:-0.1px;color:#111;opacity:0.85;width:14.400000000000006px;overflow:hidden">10</div>
<div class="t" style="left:223.7px;top:210.57px;line-height:1.4;font-size:4.1px;font-weight:bold;letter-spacing:-0.1px;color:#111;opacity:0.85;width:32px;overflow:hidden">CORRELATION</div>
<div class="t" style="left:335.7px;top:210.57px;line-height:1.4;font-size:4.1px;font-weight:bold;letter-spacing:-0.1px;color:#111;opacity:0.85;width:207.60000000000002px;overflow:hidden">Test Correlation 1</div>
<div class="ab" style="left:49px;top:57px;width:0.5px;height:160px;background:rgba(255,255,255,0.18)"></div>
<div class="ab" style="left:66px;top:57px;width:0.5px;height:160px;background:rgba(255,255,255,0.18)"></div>
<div class="ab" style="left:111px;top:57px;width:0.5px;height:160px;background:rgba(255,255,255,0.18)"></div>
<div class="ab" style="left:156px;top:57px;width:0.5px;height:160px;background:rgba(255,255,255,0.18)"></div>
<div class="ab" style="left:203.6px;top:57px;width:0.5px;height:160px;background:rgba(255,255,255,0.18)"></div>
<div class="ab" style="left:221px;top:57px;width:0.5px;height:160px;background:rgba(255,255,255,0.18)"></div>
<div class="ab" style="left:256px;top:57px;width:0.5px;height:160px;background:rgba(255,255,255,0.18)"></div>
<div class="ab" style="left:293.6px;top:57px;width:0.5px;height:160px;background:rgba(255,255,255,0.18)"></div>
<div class="ab" style="left:333px;top:57px;width:0.5px;height:160px;background:rgba(255,255,255,0.18)"></div>
<div class="ab" style="left:543.6px;top:57px;width:0.5px;height:160px;background:rgba(255,255,255,0.18)"></div>
<div class="ab" style="left:32px;top:282.6px;width:554px;height:6px;background:#f1f1f1"></div>
<div class="ab" style="left:38px;top:282.6px;width:204px;height:6px;background:#c9c9c9"></div>
<svg class="ab" style="left:34px;top:284.4px" width="2" height="2.6" viewBox="0 0 2 2.6"><path d="M2 0 V2.6 L0 1.3 Z" fill="#777"/></svg>
<div class="t" style="left:34px;top:294px;font-size:4.4px;color:#444;letter-spacing:-0.05px">Total: 17 Ack: 1</div>
<div class="ab" style="left:362.8px;top:292.5px;width:6.4px;height:6.4px;border-radius:50%;background:radial-gradient(circle at 35% 45%,#7ab6e0,#3a7fbf 55%,#0f4f8f)"></div>
<div class="ab" style="left:35px;top:311px;width:339px;height:9px;background:#e6e9f0"></div>
<div class="t" style="left:37px;top:313.6px;font-size:4.2px;font-weight:bold;letter-spacing:-0.2px;color:#555">Severity</div>
<div class="t" style="left:74px;top:313.6px;font-size:4.2px;font-weight:bold;letter-spacing:-0.2px;color:#555">Ack</div>
<div class="t" style="left:97px;top:313.6px;font-size:4.2px;font-weight:bold;letter-spacing:-0.2px;color:#555">SystemName</div>
<div class="t" style="left:153px;top:313.6px;font-size:4.2px;font-weight:bold;letter-spacing:-0.2px;color:#555">Site</div>
<div class="t" style="left:174px;top:313.6px;font-size:4.2px;font-weight:bold;letter-spacing:-0.2px;color:#555">Node</div>
<div class="t" style="left:229px;top:313.6px;font-size:4.2px;font-weight:bold;letter-spacing:-0.2px;color:#555">Summary</div>
<div class="ab" style="left:35px;top:320.00px;width:339px;height:7.24px;background:#ffff00"></div>
<div class="t" style="left:36.5px;top:321.80px;font-size:4.3px;font-weight:bold;letter-spacing:-0.18px;color:#222;opacity:0.8">3</div>
<div class="t" style="left:73.5px;top:321.80px;font-size:4.3px;font-weight:bold;letter-spacing:-0.18px;color:#222;opacity:0.8">No</div>
<div class="t" style="left:96.5px;top:321.80px;font-size:4.3px;font-weight:bold;letter-spacing:-0.18px;color:#222;opacity:0.8">-</div>
<div class="t" style="left:152.5px;top:321.80px;font-size:4.3px;font-weight:bold;letter-spacing:-0.18px;color:#222;opacity:0.8">-</div>
<div class="t" style="left:173.5px;top:321.80px;font-size:4.3px;font-weight:bold;letter-spacing:-0.18px;color:#222;opacity:0.8">SEAPPLX0021</div>
<div class="t" style="left:228.5px;top:321.80px;font-size:4.3px;font-weight:bold;letter-spacing:-0.18px;color:#222;opacity:0.8">408 Request Timeout</div>
<div class="ab" style="left:35px;top:327.24px;width:339px;height:7.24px;background:#ffff00"></div>
<div class="t" style="left:36.5px;top:329.04px;font-size:4.3px;font-weight:bold;letter-spacing:-0.18px;color:#222;opacity:0.8">3</div>
<div class="t" style="left:73.5px;top:329.04px;font-size:4.3px;font-weight:bold;letter-spacing:-0.18px;color:#222;opacity:0.8">No</div>
<div class="t" style="left:96.5px;top:329.04px;font-size:4.3px;font-weight:bold;letter-spacing:-0.18px;color:#222;opacity:0.8">-</div>
<div class="t" style="left:152.5px;top:329.04px;font-size:4.3px;font-weight:bold;letter-spacing:-0.18px;color:#222;opacity:0.8">-</div>
<div class="t" style="left:173.5px;top:329.04px;font-size:4.3px;font-weight:bold;letter-spacing:-0.18px;color:#222;opacity:0.8">SEAPPLX0021</div>
<div class="t" style="left:228.5px;top:329.04px;font-size:4.3px;font-weight:bold;letter-spacing:-0.18px;color:#222;opacity:0.8">WebSite DOWN</div>
<div class="ab" style="left:35px;top:334.48px;width:339px;height:7.24px;background:#ffff00"></div>
<div class="t" style="left:36.5px;top:336.28px;font-size:4.3px;font-weight:bold;letter-spacing:-0.18px;color:#222;opacity:0.8">3</div>
<div class="t" style="left:73.5px;top:336.28px;font-size:4.3px;font-weight:bold;letter-spacing:-0.18px;color:#222;opacity:0.8">No</div>
<div class="t" style="left:96.5px;top:336.28px;font-size:4.3px;font-weight:bold;letter-spacing:-0.18px;color:#222;opacity:0.8">-</div>
<div class="t" style="left:152.5px;top:336.28px;font-size:4.3px;font-weight:bold;letter-spacing:-0.18px;color:#222;opacity:0.8">-</div>
<div class="t" style="left:173.5px;top:336.28px;font-size:4.3px;font-weight:bold;letter-spacing:-0.18px;color:#222;opacity:0.8">SEAPPLX0021</div>
<div class="t" style="left:228.5px;top:336.28px;font-size:4.3px;font-weight:bold;letter-spacing:-0.18px;color:#222;opacity:0.8">Mixed processor speeds detected. Please make sure that all processors are the same speed. -- System Halted!</div>
<div class="ab" style="left:35px;top:341.72px;width:339px;height:7.24px;background:#ffaa2b"></div>
<div class="t" style="left:36.5px;top:343.52px;font-size:4.3px;font-weight:bold;letter-spacing:-0.18px;color:#222;opacity:0.8">4</div>
<div class="t" style="left:73.5px;top:343.52px;font-size:4.3px;font-weight:bold;letter-spacing:-0.18px;color:#222;opacity:0.8">No</div>
<div class="t" style="left:96.5px;top:343.52px;font-size:4.3px;font-weight:bold;letter-spacing:-0.18px;color:#222;opacity:0.8">-</div>
<div class="t" style="left:152.5px;top:343.52px;font-size:4.3px;font-weight:bold;letter-spacing:-0.18px;color:#222;opacity:0.8">-</div>
<div class="t" style="left:173.5px;top:343.52px;font-size:4.3px;font-weight:bold;letter-spacing:-0.18px;color:#222;opacity:0.8">SEAPPLX0021</div>
<div class="t" style="left:228.5px;top:343.52px;font-size:4.3px;font-weight:bold;letter-spacing:-0.18px;color:#222;opacity:0.8">Internal CPU Check - Processor</div>
<div class="ab" style="left:35px;top:348.96px;width:339px;height:7.24px;background:#ff0000"></div>
<div class="t" style="left:36.5px;top:350.76px;font-size:4.3px;font-weight:bold;letter-spacing:-0.18px;color:#8a0000;opacity:0.8">5</div>
<div class="t" style="left:73.5px;top:350.76px;font-size:4.3px;font-weight:bold;letter-spacing:-0.18px;color:#8a0000;opacity:0.8">No</div>
<div class="t" style="left:96.5px;top:350.76px;font-size:4.3px;font-weight:bold;letter-spacing:-0.18px;color:#8a0000;opacity:0.8">-</div>
<div class="t" style="left:152.5px;top:350.76px;font-size:4.3px;font-weight:bold;letter-spacing:-0.18px;color:#8a0000;opacity:0.8">-</div>
<div class="t" style="left:173.5px;top:350.76px;font-size:4.3px;font-weight:bold;letter-spacing:-0.18px;color:#8a0000;opacity:0.8">SEAPPLX0021</div>
<div class="t" style="left:228.5px;top:350.76px;font-size:4.3px;font-weight:bold;letter-spacing:-0.18px;color:#8a0000;opacity:0.8">FATAL ROM ERROR, The System ROM is not Properly Programmed</div>
<div class="ab" style="left:35px;top:356.20px;width:339px;height:7.24px;background:#ff0000"></div>
<div class="t" style="left:36.5px;top:358.00px;font-size:4.3px;font-weight:bold;letter-spacing:-0.18px;color:#8a0000;opacity:0.8">5</div>
<div class="t" style="left:73.5px;top:358.00px;font-size:4.3px;font-weight:bold;letter-spacing:-0.18px;color:#8a0000;opacity:0.8">No</div>
<div class="t" style="left:96.5px;top:358.00px;font-size:4.3px;font-weight:bold;letter-spacing:-0.18px;color:#8a0000;opacity:0.8">-</div>
<div class="t" style="left:152.5px;top:358.00px;font-size:4.3px;font-weight:bold;letter-spacing:-0.18px;color:#8a0000;opacity:0.8">-</div>
<div class="t" style="left:173.5px;top:358.00px;font-size:4.3px;font-weight:bold;letter-spacing:-0.18px;color:#8a0000;opacity:0.8">SEAPPLX0021</div>
<div class="t" style="left:228.5px;top:358.00px;font-size:4.3px;font-weight:bold;letter-spacing:-0.18px;color:#8a0000;opacity:0.8">License acquisition failure details</div>
<div class="ab" style="left:35px;top:363.44px;width:339px;height:7.24px;background:#ffaa2b"></div>
<div class="t" style="left:36.5px;top:365.24px;font-size:4.3px;font-weight:bold;letter-spacing:-0.18px;color:#222;opacity:0.8">4</div>
<div class="t" style="left:73.5px;top:365.24px;font-size:4.3px;font-weight:bold;letter-spacing:-0.18px;color:#222;opacity:0.8">No</div>
<div class="t" style="left:96.5px;top:365.24px;font-size:4.3px;font-weight:bold;letter-spacing:-0.18px;color:#222;opacity:0.8">-</div>
<div class="t" style="left:152.5px;top:365.24px;font-size:4.3px;font-weight:bold;letter-spacing:-0.18px;color:#222;opacity:0.8">-</div>
<div class="t" style="left:173.5px;top:365.24px;font-size:4.3px;font-weight:bold;letter-spacing:-0.18px;color:#222;opacity:0.8">SEAPPLX0021</div>
<div class="t" style="left:228.5px;top:365.24px;font-size:4.3px;font-weight:bold;letter-spacing:-0.18px;color:#222;opacity:0.8">401 Unauthorized</div>
<div class="ab" style="left:35px;top:370.68px;width:339px;height:7.24px;background:#b30000"></div>
<div class="t" style="left:36.5px;top:372.48px;font-size:4.3px;font-weight:bold;letter-spacing:-0.18px;color:#f3d0d0;opacity:0.8">5</div>
<div class="t" style="left:73.5px;top:372.48px;font-size:4.3px;font-weight:bold;letter-spacing:-0.18px;color:#f3d0d0;opacity:0.8">Yes</div>
<div class="t" style="left:96.5px;top:372.48px;font-size:4.3px;font-weight:bold;letter-spacing:-0.18px;color:#f3d0d0;opacity:0.8">-</div>
<div class="t" style="left:152.5px;top:372.48px;font-size:4.3px;font-weight:bold;letter-spacing:-0.18px;color:#f3d0d0;opacity:0.8">-</div>
<div class="t" style="left:173.5px;top:372.48px;font-size:4.3px;font-weight:bold;letter-spacing:-0.18px;color:#f3d0d0;opacity:0.8">SEAPPLX0021</div>
<div class="t" style="left:228.5px;top:372.48px;font-size:4.3px;font-weight:bold;letter-spacing:-0.18px;color:#f3d0d0;opacity:0.8">Acquisition of genuine ticket failed (hr=0x80072EE7) for template id {0fb8d724-d682-4d71-863a-d8ec3f160f0f}</div>
<div class="ab" style="left:35px;top:377.92px;width:339px;height:7.24px;background:#ffaa2b"></div>
<div class="t" style="left:36.5px;top:379.72px;font-size:4.3px;font-weight:bold;letter-spacing:-0.18px;color:#222;opacity:0.8">4</div>
<div class="t" style="left:73.5px;top:379.72px;font-size:4.3px;font-weight:bold;letter-spacing:-0.18px;color:#222;opacity:0.8">No</div>
<div class="t" style="left:96.5px;top:379.72px;font-size:4.3px;font-weight:bold;letter-spacing:-0.18px;color:#222;opacity:0.8">-</div>
<div class="t" style="left:152.5px;top:379.72px;font-size:4.3px;font-weight:bold;letter-spacing:-0.18px;color:#222;opacity:0.8">-</div>
<div class="t" style="left:173.5px;top:379.72px;font-size:4.3px;font-weight:bold;letter-spacing:-0.18px;color:#222;opacity:0.8">SEAPPLX0021</div>
<div class="t" style="left:228.5px;top:379.72px;font-size:4.3px;font-weight:bold;letter-spacing:-0.18px;color:#222;opacity:0.8">500 Internal Server Error</div>
<div class="ab" style="left:35px;top:385.16px;width:339px;height:7.24px;background:#ffaa2b"></div>
<div class="t" style="left:36.5px;top:386.96px;font-size:4.3px;font-weight:bold;letter-spacing:-0.18px;color:#222;opacity:0.8">4</div>
<div class="t" style="left:73.5px;top:386.96px;font-size:4.3px;font-weight:bold;letter-spacing:-0.18px;color:#222;opacity:0.8">No</div>
<div class="t" style="left:96.5px;top:386.96px;font-size:4.3px;font-weight:bold;letter-spacing:-0.18px;color:#222;opacity:0.8">-</div>
<div class="t" style="left:152.5px;top:386.96px;font-size:4.3px;font-weight:bold;letter-spacing:-0.18px;color:#222;opacity:0.8">-</div>
<div class="t" style="left:173.5px;top:386.96px;font-size:4.3px;font-weight:bold;letter-spacing:-0.18px;color:#222;opacity:0.8">SEAPPLX0021</div>
<div class="t" style="left:228.5px;top:386.96px;font-size:4.3px;font-weight:bold;letter-spacing:-0.18px;color:#222;opacity:0.8">400 Bad Request from Website</div>
<div class="ab" style="left:72px;top:320px;width:0.5px;height:72.4px;background:rgba(255,255,255,0.3)"></div>
<div class="ab" style="left:95px;top:320px;width:0.5px;height:72.4px;background:rgba(255,255,255,0.3)"></div>
<div class="ab" style="left:151px;top:320px;width:0.5px;height:72.4px;background:rgba(255,255,255,0.3)"></div>
<div class="ab" style="left:172px;top:320px;width:0.5px;height:72.4px;background:rgba(255,255,255,0.3)"></div>
<div class="ab" style="left:227px;top:320px;width:0.5px;height:72.4px;background:rgba(255,255,255,0.3)"></div>
<svg class="ab" style="left:14px;top:14px" width="16" height="410" viewBox="14 14 16 410">
<g fill="#a9a9a9" stroke="#a9a9a9">
<circle cx="20.8" cy="22.2" r="2.1" fill="none" stroke-width="1.1"/><path d="M22.3 23.8 L24.8 26.2" stroke-width="1.4"/>
<path d="M21.6 33 L22.5 35.2 L24.8 35.3 L23 36.8 L23.6 39 L21.6 37.8 L19.6 39 L20.2 36.8 L18.4 35.3 L20.7 35.2 Z" stroke="none"/>
<path d="M18.2 47.2 H21 L21.8 48.2 H25 V52.6 H18.2 Z" stroke="none"/>
<circle cx="21.6" cy="60.6" r="1.9" stroke="none"/><path d="M18.4 65.5 Q21.6 61.5 24.8 65.5 Z" stroke="none"/><path d="M17.6 66.2 H25.6" stroke-width="0.7"/>
<path d="M19 72 V79" stroke-width="0.9"/><path d="M19.4 72.2 L24.6 73.6 L19.4 75.6 Z" stroke="none"/>
<rect x="18" y="86" width="7.4" height="5.2" fill="none" stroke-width="0.9"/><rect x="19.5" y="87.4" width="3" height="2.4" stroke="none"/>
<path d="M18.6 104.4 L24.4 98.6 M18.8 98.8 L24.6 104.6" stroke-width="1.2"/><circle cx="24" cy="99" r="1.1" stroke="none"/>
<rect x="18.2" y="112.4" width="7" height="4.8" stroke="none"/><path d="M18.4 112.8 L21.7 115.3 L25 112.8" fill="none" stroke="#2f2f2f" stroke-width="0.7"/>
<circle cx="21.7" cy="127.6" r="3.2" fill="none" stroke-width="0.9"/><path d="M18.6 127.6 H24.8 M21.7 124.4 V130.8" stroke-width="0.6"/><ellipse cx="21.7" cy="127.6" rx="1.4" ry="3.1" fill="none" stroke-width="0.6"/>
<path d="M21.7 137.6 V144.6 M18.6 139.4 L24.8 142.8 M18.6 142.8 L24.8 139.4" stroke-width="0.9"/>
</g>
<g fill="#bcbcbc" stroke="#bcbcbc">
<circle cx="22" cy="373" r="1.9" stroke="none"/><path d="M18.6 378 Q22 374.2 25.4 378 Z" stroke="none"/>
<rect x="18.6" y="384.8" width="3.1" height="3" stroke="none"/><rect x="22.4" y="384.8" width="3.1" height="3" stroke="none"/><rect x="18.6" y="388.4" width="3.1" height="3" stroke="none"/><rect x="22.4" y="388.4" width="3.1" height="3" stroke="none"/>
<circle cx="22" cy="401.5" r="2.6" fill="none" stroke-width="1.3"/><circle cx="22" cy="401.5" r="0.9" stroke="none"/>
<circle cx="22" cy="414.5" r="3.3" fill="none" stroke-width="0.8"/><path d="M21 413.4 L22 415.6 L23 413.4" fill="none" stroke-width="0.8"/>
</g>
</svg>

<svg class="ab" style="left:590px;top:31px" width="235" height="207" viewBox="590 31 235 207">
<defs>
<filter id="mott" x="590" y="31" width="235" height="207" filterUnits="userSpaceOnUse">
<feTurbulence type="fractalNoise" baseFrequency="0.16" numOctaves="2" seed="7" result="n"/>
<feColorMatrix in="n" type="matrix" values="0 0 0 0 0.96  0 0 0 0 0.96  0 0 0 0 0.95  4.5 0 0 0 -1.95"/>
</filter>
</defs>
<rect x="590" y="31" width="235" height="207" fill="#c8e4bd"/>
<!-- open land whitish areas -->
<path d="M612 70 L660 70 L668 95 L660 118 L640 122 L618 112 L620 99 L612 88 Z" fill="#eceee8" opacity="0.9"/>
<path d="M700 32 L760 31 L764 70 L705 72 Z" fill="#e6eee2" opacity="0.6"/>
<path d="M625 190 L660 178 L680 185 L676 205 L650 215 L620 212 Z" fill="#e6eee0" opacity="0.7"/>
<path d="M768 31 L825 31 L825 140 L800 143 L775 132 L764 112 L768 70 Z" fill="#e4eedd" opacity="0.5"/>
<path d="M776 95 L800 92 L820 110 L812 130 L790 128 L778 115 Z" fill="#e9eee5" opacity="0.8"/>
<rect x="590" y="31" width="235" height="207" filter="url(#mott)" opacity="0.95"/>
<!-- sea: gulf of bothnia + baltic -->
<path d="M717 31 L761.4 31 L761.4 33.6 L763.3 46.8 L767 65.6 L768 84.4 L768.7 100 L766 110 L763 117 L763.7 126 L771 131 L781 137.8 L788.8 147.5 L798.6 149.5 L810 145.6 L824 141.7 L825 141.7 L825 166.7 L808.4 173.8 L800.5 175 L798.6 188.5 L796.6 202 L806.4 213.8 L814 229.4 L816 238 L685 238 L686 222 L687 209 L691 196.6 L700 188 L712.5 181.7 L721 175 L719 162.5 L725 157 L724 150 L719 137 L712.5 128.5 L702 121 L695 119.6 L694 102.5 L697 81 L699.4 70.6 L706 60 L708 47 Z" fill="#aadaff"/>
<!-- west coast sea -->
<path d="M590 174 L592 176 L593 188 L594.5 198 L598 207 L603 215 L606.5 225 L609.5 238 L590 238 Z" fill="#aadaff"/>
<!-- islands -->
<path d="M734 134 L740 132.8 L746.6 136 L746 143 L740 145.5 L735 141 Z" fill="#e8eee2"/>
<path d="M778 181.6 L786.9 177.8 L795.6 183.6 L788.8 189.5 L782 187.5 Z" fill="#cfe6c6"/>
<path d="M774.2 197.3 L783 192.4 L796.6 194.3 L792.7 202 L783 207 L779 213.8 L777 208 Z" fill="#d3e8cb"/>
<path d="M729.6 212.5 L727.4 220 L721 228.5 L719 238 L710 238 L714.7 226.4 L723 220 Z" fill="#d9eacf"/>
<path d="M767.4 238 L775 227.5 L785 221.6 L792.7 225.5 L796.6 238 Z" fill="#cfe6c6"/>
<circle cx="748" cy="118" r="1" fill="#e8f0ea"/><circle cx="757" cy="128" r="0.8" fill="#e8f0ea"/>
<path d="M721 165 L726 163 L728 170 L723 174 Z" fill="#e2ecdc" opacity="0.9"/>
<path d="M760 128 L766 126 L772 133 L768 138 L762 134 Z" fill="#e6ede0" opacity="0.9"/>
<!-- lakes -->
<path d="M626 167.6 L642 169 L642.7 180 L637 190 L626 196 L614.8 198 L613 188 L619.5 178.8 L625 175.6 Z" fill="#aadaff"/>
<path d="M656.3 186.7 L655.5 198 L650 207.5 L644.3 215.5 L643.5 210.7 L646.7 199.5 L653 190 Z" fill="#aadaff"/>
<path d="M668 167 L690 166 L704 168 L700 173 L684 172 L664 172 Z" fill="#aadaff" opacity="0.85"/>
<path d="M652 110 L658 113 L655 117 L650 114 Z" fill="#aadaff"/>
<!-- norway border -->
<path d="M610.8 31 L610.8 70.8 L609 85 L615.5 91.6 L620.3 99.5 L618.7 107.5 L611.6 112.3 L615.5 126.7 L615.5 136.3 L611.6 147.5 L605 152.3 L602 159.6 L601 166 L602 175.6 L598.8 183.5 L595.6 182 L591.6 178" fill="none" stroke="#8c8c8c" stroke-width="0.7"/>
<!-- roads -->
<g fill="none" stroke="#f3cf70" stroke-width="0.9" opacity="0.95">
<path d="M602 238 L606 217 L612 205 L630 192 L652 180 L680 168 L706 162"/>
<path d="M606 217 L630 210 L648 213 L665 205 L684 192 L706 165"/>
<path d="M648 213 L650 238"/>
<path d="M694 130 L697 110 L700 90 L699 70"/>
<path d="M694 130 L705 150 L707 160"/>
<path d="M673 133 L690 128 L694 130"/>
<path d="M760 35 L772 60 L780 95 L778 126 L800 136 L824 136"/>
<path d="M772 60 L790 50 L810 60 L824 80"/>
<path d="M778 126 L795 105 L815 110 L824 120"/>
<path d="M640 180 L660 166 L690 165"/>
</g>
<!-- labels -->
<g font-family="Liberation Sans, sans-serif" font-size="3.6" fill="#555">
<text x="684" y="88">Hudiksvall</text>
<text x="642" y="110">Mora</text>
<text x="663" y="124">Falun</text>
<text x="660" y="131">Borlänge</text>
<text x="690" y="125">Gävle</text>
<text x="624" y="163">Karlstad</text>
<text x="648" y="168">Örebro</text>
<text x="670" y="158">Västerås</text>
<text x="665" y="195">Norrköping</text>
<text x="659" y="205">Linköping</text>
<text x="634" y="216">Jönköping</text>
<text x="761" y="92.5">Björneborg</text>
<text x="813" y="196">Pärnu</text>
<text x="776" y="198" fill="#666">Saaremaa</text>
<text x="712" y="226" fill="#666">Gotland</text>
</g>
<g font-family="Liberation Sans, sans-serif" font-weight="bold" fill="#333">
<text x="790" y="91.5" font-size="4.6">Tammerfors</text>
<text x="774" y="128" font-size="4.6">Åbo</text>
<text x="813" y="136" font-size="4.6">Helsi</text>
<text x="815" y="154" font-size="4.6">Tall</text>
<text x="593" y="219" font-size="4.8">Göteborg</text>
<text x="697" y="175.2" font-size="5.2" fill="#333">Stockholm</text>
</g>
<text x="756" y="198" font-family="Liberation Sans, sans-serif" font-size="3.6" fill="#5b7fb0" font-style="italic">Östersjön</text>
<text x="0" y="0" font-family="Liberation Sans, sans-serif" font-size="3.4" fill="#5b7fb0" font-style="italic" transform="translate(729 84) rotate(-66)">Bottenhavet</text>
<circle cx="709.3" cy="168.7" r="1" fill="#222"/>
<circle cx="709.5" cy="162.3" r="2" fill="none" stroke="#f6b931" stroke-width="1.1"/>
<path d="M707.4 164.8 C706 161 702.9 159.4 702.9 155.2 A4.5 4.5 0 0 1 711.9 155.2 C711.9 159.4 708.8 161 707.4 164.8 Z" fill="#e53935" stroke="#c62828" stroke-width="0.3"/>
<circle cx="707.4" cy="155" r="1.2" fill="#7a0c0c"/>
<!-- info box -->
<rect x="593.6" y="36.5" width="113.2" height="33.8" fill="#fff"/>
<rect x="593.6" y="70.3" width="113.2" height="0.6" fill="#d8d8d8"/>
<text x="598.5" y="45" font-family="Liberation Sans, sans-serif" font-size="4.8" font-weight="bold" fill="#222">59°24'08.8"N 17°56'47.3"E</text>
<path d="M689 48.5 V45 L686.8 42.2 M689 45 L691.2 42.2" stroke="#3b6fd6" stroke-width="0.9" fill="none"/><path d="M685.6 41.4 L687.8 41.6 L686.6 43.4 Z M692.4 41.4 L690.2 41.6 L691.4 43.4 Z" fill="#3b6fd6"/>
<text x="679.5" y="54" font-family="Liberation Sans, sans-serif" font-size="3.8" fill="#3b6fd6">Vägbesk...</text>
<text x="598" y="65.5" font-family="Liberation Sans, sans-serif" font-size="3.8" fill="#3b6fd6">Visa en större karta</text>
</svg>

<div class="ab" style="left:374px;top:238px;width:610px;height:308px;background:#fff;border:1.7px solid #747474"></div>
<div class="t" style="left:378.8px;top:242.2px;font-size:9.2px;font-weight:bold;color:#2e2e2e;letter-spacing:-0.5px">Compose</div>
<div class="ab" style="left:419.4px;top:240.4px;width:13px;height:12.4px;border-radius:50%;background:#2560b6;border:0.7px solid #7ea4dc"></div>
<div class="t" style="left:422.6px;top:242.9px;font-size:7.6px;font-weight:bold;color:#fff;letter-spacing:-0.3px">IT</div>
<div class="t" style="left:580px;top:241.5px;font-size:8.7px;color:#5a5a5a;letter-spacing:-0.45px">Historical Events</div>
<div class="t" style="left:952px;top:240.8px;font-size:3.2px;color:#777">© Compose 2018</div>
<div class="ab" style="left:978px;top:239.5px;width:4.5px;height:305px;background:#f0f0f0"></div>
<div class="ab" style="left:978.3px;top:244.5px;width:4px;height:70px;background:#c6c6c6"></div>
<svg class="ab" style="left:979px;top:241.6px" width="2.4" height="1.6" viewBox="0 0 2.4 1.6"><path d="M0 1.6 H2.4 L1.2 0 Z" fill="#888"/></svg>
<svg class="ab" style="left:979px;top:542px" width="2.4" height="1.6" viewBox="0 0 2.4 1.6"><path d="M0 0 H2.4 L1.2 1.6 Z" fill="#888"/></svg>
<div class="t" style="left:377px;top:254.80px;font-size:4.0px;color:#666;letter-spacing:-0.12px;">Choose Time</div>
<div class="ab" style="left:377px;top:259.3px;width:43.5px;height:6.6px;background:#fff;border:0.6px solid #f3f3f3;"></div>
<div class="t" style="left:379.5px;top:262.20px;font-size:3.7px;color:#999;letter-spacing:-0.12px;">2018-09-10</div>
<div class="ab" style="left:421px;top:259.6px;width:5px;height:6px;background:linear-gradient(#5b7fd0 0 1.5px,#f4eeee 1.5px);border:0.4px solid #c8c8c8"></div>
<div class="ab" style="left:423px;top:261.8px;width:1.8px;height:1.8px;background:#e07070"></div>
<div class="ab" style="left:428px;top:259.3px;width:26px;height:6.6px;background:#fff;border:0.6px solid #f4f4f4;"></div>
<div class="t" style="left:430px;top:262.20px;font-size:3.7px;color:#888;letter-spacing:-0.12px;">00 : 00 : 07</div>
<div class="ab" style="left:448.6px;top:260.7px;width:3.6px;height:3.6px;border-radius:50%;background:#666"></div><div class="ab" style="left:449.7px;top:262.3px;width:1.4px;height:0.4px;background:#fff"></div><div class="ab" style="left:450.2px;top:261.8px;width:0.4px;height:1.4px;background:#fff"></div>
<div class="ab" style="left:377px;top:266.40000000000003px;width:43.5px;height:6.6px;background:#fff;border:0.6px solid #f3f3f3;"></div>
<div class="t" style="left:379.5px;top:269.30px;font-size:3.7px;color:#999;letter-spacing:-0.12px;">2018-09-17</div>
<div class="ab" style="left:421px;top:266.70000000000005px;width:5px;height:6px;background:linear-gradient(#5b7fd0 0 1.5px,#f4eeee 1.5px);border:0.4px solid #c8c8c8"></div>
<div class="ab" style="left:423px;top:268.90000000000003px;width:1.8px;height:1.8px;background:#e07070"></div>
<div class="ab" style="left:428px;top:266.40000000000003px;width:26px;height:6.6px;background:#fff;border:0.6px solid #f4f4f4;"></div>
<div class="t" style="left:430px;top:269.30px;font-size:3.7px;color:#888;letter-spacing:-0.12px;">23 : 59 : 59</div>
<div class="ab" style="left:448.6px;top:267.8px;width:3.6px;height:3.6px;border-radius:50%;background:#666"></div><div class="ab" style="left:449.7px;top:269.40000000000003px;width:1.4px;height:0.4px;background:#fff"></div><div class="ab" style="left:450.2px;top:268.90000000000003px;width:0.4px;height:1.4px;background:#fff"></div>
<div class="t" style="left:377px;top:279.80px;font-size:4.0px;color:#666;letter-spacing:-0.12px;">SearchFields</div>
<div class="ab" style="left:377px;top:284.2px;width:30.5px;height:7.8px;background:#fff;border:0.6px solid #f2f2f2;"></div>
<div class="t" style="left:380px;top:287.00px;font-size:3.7px;color:#888;letter-spacing:-0.12px;">NodeName</div>
<div class="ab" style="left:407.5px;top:284.7px;width:3.8px;height:7px;background:#e8e8e8;border:0.6px solid #e0e0e0;"></div>
<div class="ab" style="left:411.5px;top:284.2px;width:28px;height:7.8px;background:#fff;border:0.6px solid #f2f2f2;"></div>
<div class="t" style="left:415px;top:287.00px;font-size:3.7px;color:#888;letter-spacing:-0.12px;">=</div>
<div class="ab" style="left:439.5px;top:284.7px;width:3.8px;height:7px;background:#e8e8e8;border:0.6px solid #e0e0e0;"></div>
<div class="ab" style="left:444px;top:284.2px;width:119.5px;height:7.8px;background:#fff;border:0.6px solid #f2f2f2;"></div>
<div class="t" style="left:446px;top:287.00px;font-size:3.7px;color:#888;letter-spacing:-0.12px;">SEAPPLX0021</div>
<div class="ab" style="left:563.6px;top:286.0px;width:3.6px;height:3.6px;border-radius:50%;border:0.4px solid #d4d4d4;background:#fafafa"></div>
<div class="t" style="left:568px;top:286.90px;font-size:3.6px;color:#555;letter-spacing:-0.12px;font-weight:bold">AND</div>
<div class="ab" style="left:576.2px;top:286.0px;width:3.6px;height:3.6px;border-radius:50%;border:0.4px solid #d4d4d4;background:#fafafa"></div>
<div class="t" style="left:580.5px;top:286.90px;font-size:3.6px;color:#555;letter-spacing:-0.12px;font-weight:bold">OR</div>
<div class="ab" style="left:377px;top:292.34999999999997px;width:30.5px;height:7.8px;background:#fff;border:0.6px solid #f2f2f2;"></div>
<div class="t" style="left:380px;top:295.15px;font-size:3.7px;color:#888;letter-spacing:-0.12px;">N/A</div>
<div class="ab" style="left:407.5px;top:292.84999999999997px;width:3.8px;height:7px;background:#e8e8e8;border:0.6px solid #e0e0e0;"></div>
<div class="ab" style="left:411.5px;top:292.34999999999997px;width:28px;height:7.8px;background:#fff;border:0.6px solid #f2f2f2;"></div>
<div class="t" style="left:415px;top:295.15px;font-size:3.7px;color:#888;letter-spacing:-0.12px;">=</div>
<div class="ab" style="left:439.5px;top:292.84999999999997px;width:3.8px;height:7px;background:#e8e8e8;border:0.6px solid #e0e0e0;"></div>
<div class="ab" style="left:444px;top:292.34999999999997px;width:119.5px;height:7.8px;background:#fff;border:0.6px solid #f2f2f2;"></div>
<div class="ab" style="left:563.6px;top:294.15px;width:3.6px;height:3.6px;border-radius:50%;border:0.4px solid #d4d4d4;background:#fafafa"></div>
<div class="t" style="left:568px;top:295.05px;font-size:3.6px;color:#555;letter-spacing:-0.12px;font-weight:bold">AND</div>
<div class="ab" style="left:576.2px;top:294.15px;width:3.6px;height:3.6px;border-radius:50%;border:0.4px solid #d4d4d4;background:#fafafa"></div>
<div class="t" style="left:580.5px;top:295.05px;font-size:3.6px;color:#555;letter-spacing:-0.12px;font-weight:bold">OR</div>
<div class="ab" style="left:377px;top:300.5px;width:30.5px;height:7.8px;background:#fff;border:0.6px solid #f2f2f2;"></div>
<div class="t" style="left:380px;top:303.30px;font-size:3.7px;color:#888;letter-spacing:-0.12px;">N/A</div>
<div class="ab" style="left:407.5px;top:301.0px;width:3.8px;height:7px;background:#e8e8e8;border:0.6px solid #e0e0e0;"></div>
<div class="ab" style="left:411.5px;top:300.5px;width:28px;height:7.8px;background:#fff;border:0.6px solid #f2f2f2;"></div>
<div class="t" style="left:415px;top:303.30px;font-size:3.7px;color:#888;letter-spacing:-0.12px;">=</div>
<div class="ab" style="left:439.5px;top:301.0px;width:3.8px;height:7px;background:#e8e8e8;border:0.6px solid #e0e0e0;"></div>
<div class="ab" style="left:444px;top:300.5px;width:119.5px;height:7.8px;background:#fff;border:0.6px solid #f2f2f2;"></div>
<div class="ab" style="left:563.6px;top:302.3px;width:3.6px;height:3.6px;border-radius:50%;border:0.4px solid #d4d4d4;background:#fafafa"></div>
<div class="t" style="left:568px;top:303.20px;font-size:3.6px;color:#555;letter-spacing:-0.12px;font-weight:bold">AND</div>
<div class="ab" style="left:576.2px;top:302.3px;width:3.6px;height:3.6px;border-radius:50%;border:0.4px solid #d4d4d4;background:#fafafa"></div>
<div class="t" style="left:580.5px;top:303.20px;font-size:3.6px;color:#555;letter-spacing:-0.12px;font-weight:bold">OR</div>
<div class="ab" style="left:377px;top:308.65px;width:30.5px;height:7.8px;background:#fff;border:0.6px solid #f2f2f2;"></div>
<div class="t" style="left:380px;top:311.45px;font-size:3.7px;color:#888;letter-spacing:-0.12px;">N/A</div>
<div class="ab" style="left:407.5px;top:309.15px;width:3.8px;height:7px;background:#e8e8e8;border:0.6px solid #e0e0e0;"></div>
<div class="ab" style="left:411.5px;top:308.65px;width:28px;height:7.8px;background:#fff;border:0.6px solid #f2f2f2;"></div>
<div class="t" style="left:415px;top:311.45px;font-size:3.7px;color:#888;letter-spacing:-0.12px;">=</div>
<div class="ab" style="left:439.5px;top:309.15px;width:3.8px;height:7px;background:#e8e8e8;border:0.6px solid #e0e0e0;"></div>
<div class="ab" style="left:444px;top:308.65px;width:119.5px;height:7.8px;background:#fff;border:0.6px solid #f2f2f2;"></div>
<div class="ab" style="left:563.6px;top:310.45px;width:3.6px;height:3.6px;border-radius:50%;border:0.4px solid #d4d4d4;background:#fafafa"></div>
<div class="t" style="left:568px;top:311.35px;font-size:3.6px;color:#555;letter-spacing:-0.12px;font-weight:bold">AND</div>
<div class="ab" style="left:576.2px;top:310.45px;width:3.6px;height:3.6px;border-radius:50%;border:0.4px solid #d4d4d4;background:#fafafa"></div>
<div class="t" style="left:580.5px;top:311.35px;font-size:3.6px;color:#555;letter-spacing:-0.12px;font-weight:bold">OR</div>
<svg class="ab" style="left:376.5px;top:318.5px" width="5" height="5" viewBox="0 0 5 5"><path d="M0.5 4.5 L1 3 L3.8 0.3 L4.7 1.2 L2 4 Z" fill="#333"/></svg>
<div class="ab" style="left:383px;top:318.5px;width:15px;height:7px;background:#f4f4f4;border:0.6px solid #ececec;"></div>
<div class="t" style="left:385.2px;top:320.90px;font-size:3.8px;color:#555;letter-spacing:-0.12px;">Search</div>
<div class="ab" style="left:400px;top:318.5px;width:28.5px;height:7px;background:#f4f4f4;border:0.6px solid #ececec;"></div>
<div class="t" style="left:402px;top:320.90px;font-size:3.8px;color:#555;letter-spacing:-0.12px;">Export To CSV</div>
<div class="t" style="left:377px;top:329.80px;font-size:3.5px;color:#777;letter-spacing:-0.12px;letter-spacing:-0.2px">Number of Events: 1152 Showing the last 150</div>
<div class="ab" style="left:449px;top:327.2px;width:18.5px;height:7.5px;background:#f2f2f2;border:0.6px solid #e2e2e2;"></div>
<div class="t" style="left:451.5px;top:329.80px;font-size:3.8px;color:#444;letter-spacing:-0.12px;">Show all</div>
<div class="t" style="left:378.2px;top:340.10px;font-size:3.5px;color:#333;letter-spacing:-0.12px;font-weight:bold">#</div>
<div class="t" style="left:387px;top:340.10px;font-size:3.5px;color:#333;letter-spacing:-0.12px;font-weight:bold">SEVERITY</div>
<div class="t" style="left:413px;top:340.10px;font-size:3.5px;color:#333;letter-spacing:-0.12px;font-weight:bold">YFIRSTOCCURRENCE</div>
<div class="t" style="left:475px;top:340.10px;font-size:3.5px;color:#333;letter-spacing:-0.12px;font-weight:bold">YLASTOCCURRENCE</div>
<div class="t" style="left:536px;top:340.10px;font-size:3.5px;color:#333;letter-spacing:-0.12px;font-weight:bold">YTALLY</div>
<div class="t" style="left:561px;top:340.10px;font-size:3.5px;color:#333;letter-spacing:-0.12px;font-weight:bold">YSUMMARY</div>
<div class="t" style="left:794px;top:340.10px;font-size:3.5px;color:#333;letter-spacing:-0.12px;font-weight:bold">PAPI</div>
<div class="t" style="left:831px;top:340.10px;font-size:3.5px;color:#333;letter-spacing:-0.12px;font-weight:bold">YOBJECTTYPE</div>
<div class="t" style="left:875px;top:340.10px;font-size:3.5px;color:#333;letter-spacing:-0.12px;font-weight:bold">YSUPPRESSESCL</div>
<div class="t" style="left:925px;top:340.10px;font-size:3.5px;color:#333;letter-spacing:-0.12px;font-weight:bold">YKnowledge Base</div>
<div class="ab" style="left:375.5px;top:343px;width:607px;height:201.5px;overflow:hidden"><div class="ab" style="left:-375.5px;top:-343px;width:999px;height:564px">
<div class="ab" style="left:376px;top:343.80px;width:601px;height:7.63px;background:#f2f2f2"></div>
<svg class="ab" style="left:392px;top:345.40px" width="5" height="5" viewBox="0 0 5 5"><path d="M2.5 0.2 L4.9 4.6 H0.1 Z" fill="#e7b62a"/><rect x="2.2" y="1.6" width="0.6" height="1.8" fill="#7a5a10"/></svg>
<div class="t" style="left:413px;top:347.70px;font-size:3.8px;color:#6a6a6a;letter-spacing:-0.12px;letter-spacing:-0.2px">2018-09-17 09:00:13</div>
<div class="t" style="left:475px;top:347.70px;font-size:3.8px;color:#6a6a6a;letter-spacing:-0.12px;letter-spacing:-0.2px">2018-09-17 09:00:13</div>
<div class="t" style="left:537px;top:347.70px;font-size:3.8px;color:#555;letter-spacing:-0.12px;letter-spacing:-0.2px">1</div>
<div class="t" style="left:561px;top:346.98px;font-size:3.8px;color:#5a5a5a;letter-spacing:-0.12px;width:228px;overflow:hidden;line-height:1.4;letter-spacing:-0.2px">408 Request Timeout</div>
<div class="t" style="left:831px;top:347.70px;font-size:3.8px;color:#5e5e5e;letter-spacing:-0.12px;letter-spacing:-0.2px">Website</div>
<div class="t" style="left:875px;top:347.70px;font-size:3.8px;color:#5e5e5e;letter-spacing:-0.12px;letter-spacing:-0.2px">Normal</div>
<div class="t" style="left:925px;top:347.70px;font-size:3.8px;color:#3f8af2;letter-spacing:-0.12px;font-weight:bold;letter-spacing:-0.2px">Knowledge Base</div>
<div class="ab" style="left:376px;top:351.43px;width:601px;height:7.63px;background:#ffffff"></div>
<svg class="ab" style="left:392px;top:353.03px" width="5" height="5" viewBox="0 0 5 5"><path d="M2.5 0.2 L4.9 4.6 H0.1 Z" fill="#e7b62a"/><rect x="2.2" y="1.6" width="0.6" height="1.8" fill="#7a5a10"/></svg>
<div class="t" style="left:413px;top:355.33px;font-size:3.8px;color:#6a6a6a;letter-spacing:-0.12px;letter-spacing:-0.2px">2018-09-17 08:54:08</div>
<div class="t" style="left:475px;top:355.33px;font-size:3.8px;color:#6a6a6a;letter-spacing:-0.12px;letter-spacing:-0.2px">2018-09-17 08:54:08</div>
<div class="t" style="left:537px;top:355.33px;font-size:3.8px;color:#555;letter-spacing:-0.12px;letter-spacing:-0.2px">1</div>
<div class="t" style="left:561px;top:354.61px;font-size:3.8px;color:#5a5a5a;letter-spacing:-0.12px;width:228px;overflow:hidden;line-height:1.4;letter-spacing:-0.2px">WebSite DOWN</div>
<div class="t" style="left:794px;top:355.33px;font-size:3.8px;color:#5e5e5e;letter-spacing:-0.12px;letter-spacing:-0.2px">Availability</div>
<div class="t" style="left:831px;top:355.33px;font-size:3.8px;color:#5e5e5e;letter-spacing:-0.12px;letter-spacing:-0.2px">Website</div>
<div class="t" style="left:875px;top:355.33px;font-size:3.8px;color:#5e5e5e;letter-spacing:-0.12px;letter-spacing:-0.2px">Normal</div>
<div class="t" style="left:925px;top:355.33px;font-size:3.8px;color:#3f8af2;letter-spacing:-0.12px;font-weight:bold;letter-spacing:-0.2px">Knowledge Base</div>
<div class="ab" style="left:376px;top:359.06px;width:601px;height:7.63px;background:#f2f2f2"></div>
<svg class="ab" style="left:392px;top:360.66px" width="5" height="5" viewBox="0 0 5 5"><path d="M2.5 0.2 L4.9 4.6 H0.1 Z" fill="#e7b62a"/><rect x="2.2" y="1.6" width="0.6" height="1.8" fill="#7a5a10"/></svg>
<div class="t" style="left:413px;top:362.96px;font-size:3.8px;color:#6a6a6a;letter-spacing:-0.12px;letter-spacing:-0.2px">2018-09-17 08:52:06</div>
<div class="t" style="left:475px;top:362.96px;font-size:3.8px;color:#6a6a6a;letter-spacing:-0.12px;letter-spacing:-0.2px">2018-09-17 08:52:06</div>
<div class="t" style="left:537px;top:362.96px;font-size:3.8px;color:#555;letter-spacing:-0.12px;letter-spacing:-0.2px">1</div>
<div class="t" style="left:561px;top:362.24px;font-size:3.8px;color:#5a5a5a;letter-spacing:-0.12px;width:228px;overflow:hidden;line-height:1.4;letter-spacing:-0.2px">Mixed processor speeds detected. Please make sure that all processors are the same speed. -- System Halted!</div>
<div class="t" style="left:794px;top:362.96px;font-size:3.8px;color:#5e5e5e;letter-spacing:-0.12px;letter-spacing:-0.2px">Performance</div>
<div class="t" style="left:831px;top:362.96px;font-size:3.8px;color:#5e5e5e;letter-spacing:-0.12px;letter-spacing:-0.2px">Server</div>
<div class="t" style="left:875px;top:362.96px;font-size:3.8px;color:#5e5e5e;letter-spacing:-0.12px;letter-spacing:-0.2px">Normal</div>
<div class="t" style="left:925px;top:362.96px;font-size:3.8px;color:#3f8af2;letter-spacing:-0.12px;font-weight:bold;letter-spacing:-0.2px">Knowledge Base</div>
<div class="ab" style="left:376px;top:366.69px;width:601px;height:7.63px;background:#ffffff"></div>
<svg class="ab" style="left:392px;top:368.29px" width="5" height="5" viewBox="0 0 5 5"><path d="M0.4 0.4 H4.6 V2.2 Q4.4 4.2 2.5 4.9 Q0.6 4.2 0.4 2.2 Z" fill="#cf8a36"/><path d="M1.6 1.2 H3.4 L2.5 3.6 Z" fill="#9a5a14"/></svg>
<div class="t" style="left:413px;top:370.59px;font-size:3.8px;color:#6a6a6a;letter-spacing:-0.12px;letter-spacing:-0.2px">2018-09-17 08:49:43</div>
<div class="t" style="left:475px;top:370.59px;font-size:3.8px;color:#6a6a6a;letter-spacing:-0.12px;letter-spacing:-0.2px">2018-09-17 08:49:43</div>
<div class="t" style="left:537px;top:370.59px;font-size:3.8px;color:#555;letter-spacing:-0.12px;letter-spacing:-0.2px">1</div>
<div class="t" style="left:561px;top:369.87px;font-size:3.8px;color:#5a5a5a;letter-spacing:-0.12px;width:228px;overflow:hidden;line-height:1.4;letter-spacing:-0.2px">Internal CPU Check - Processor</div>
<div class="t" style="left:831px;top:370.59px;font-size:3.8px;color:#5e5e5e;letter-spacing:-0.12px;letter-spacing:-0.2px">Server</div>
<div class="t" style="left:875px;top:370.59px;font-size:3.8px;color:#5e5e5e;letter-spacing:-0.12px;letter-spacing:-0.2px">Normal</div>
<div class="t" style="left:925px;top:370.59px;font-size:3.8px;color:#3f8af2;letter-spacing:-0.12px;font-weight:bold;letter-spacing:-0.2px">Knowledge Base</div>
<div class="ab" style="left:376px;top:374.32px;width:601px;height:7.63px;background:#f2f2f2"></div>
<div class="ab" style="left:392.1px;top:375.82px;width:4.8px;height:4.8px;border-radius:50%;background:radial-gradient(circle at 50% 45%,#f08a8a 0,#e0404a 45%,#d0303a)"></div>
<div class="t" style="left:413px;top:378.22px;font-size:3.8px;color:#6a6a6a;letter-spacing:-0.12px;letter-spacing:-0.2px">2018-09-17 08:46:38</div>
<div class="t" style="left:475px;top:378.22px;font-size:3.8px;color:#6a6a6a;letter-spacing:-0.12px;letter-spacing:-0.2px">2018-09-17 08:46:38</div>
<div class="t" style="left:537px;top:378.22px;font-size:3.8px;color:#555;letter-spacing:-0.12px;letter-spacing:-0.2px">1</div>
<div class="t" style="left:561px;top:377.50px;font-size:3.8px;color:#5a5a5a;letter-spacing:-0.12px;width:228px;overflow:hidden;line-height:1.4;letter-spacing:-0.2px">FATAL ROM ERROR, The System ROM is not Properly Programmed</div>
<div class="t" style="left:831px;top:378.22px;font-size:3.8px;color:#5e5e5e;letter-spacing:-0.12px;letter-spacing:-0.2px">Server</div>
<div class="t" style="left:875px;top:378.22px;font-size:3.8px;color:#5e5e5e;letter-spacing:-0.12px;letter-spacing:-0.2px">Normal</div>
<div class="t" style="left:925px;top:378.22px;font-size:3.8px;color:#3f8af2;letter-spacing:-0.12px;font-weight:bold;letter-spacing:-0.2px">Knowledge Base</div>
<div class="ab" style="left:376px;top:381.95px;width:601px;height:7.63px;background:#ffffff"></div>
<svg class="ab" style="left:392px;top:383.55px" width="5" height="5" viewBox="0 0 5 5"><path d="M0.4 0.4 H4.6 V2.2 Q4.4 4.2 2.5 4.9 Q0.6 4.2 0.4 2.2 Z" fill="#cf8a36"/><path d="M1.6 1.2 H3.4 L2.5 3.6 Z" fill="#9a5a14"/></svg>
<div class="t" style="left:413px;top:385.85px;font-size:3.8px;color:#6a6a6a;letter-spacing:-0.12px;letter-spacing:-0.2px">2018-09-17 08:31:45</div>
<div class="t" style="left:475px;top:385.85px;font-size:3.8px;color:#6a6a6a;letter-spacing:-0.12px;letter-spacing:-0.2px">2018-09-17 08:31:45</div>
<div class="t" style="left:537px;top:385.85px;font-size:3.8px;color:#555;letter-spacing:-0.12px;letter-spacing:-0.2px">1</div>
<div class="t" style="left:561px;top:385.13px;font-size:3.8px;color:#5a5a5a;letter-spacing:-0.12px;width:228px;overflow:hidden;line-height:1.4;letter-spacing:-0.2px">401 Unauthorized</div>
<div class="t" style="left:794px;top:385.85px;font-size:3.8px;color:#5e5e5e;letter-spacing:-0.12px;letter-spacing:-0.2px">Security</div>
<div class="t" style="left:831px;top:385.85px;font-size:3.8px;color:#5e5e5e;letter-spacing:-0.12px;letter-spacing:-0.2px">AD</div>
<div class="t" style="left:875px;top:385.85px;font-size:3.8px;color:#5e5e5e;letter-spacing:-0.12px;letter-spacing:-0.2px">Normal</div>
<div class="t" style="left:925px;top:385.85px;font-size:3.8px;color:#3f8af2;letter-spacing:-0.12px;font-weight:bold;letter-spacing:-0.2px">Knowledge Base</div>
<div class="ab" style="left:376px;top:389.58px;width:601px;height:7.63px;background:#f2f2f2"></div>
<div class="ab" style="left:392.1px;top:391.08px;width:4.8px;height:4.8px;border-radius:50%;background:radial-gradient(circle at 50% 45%,#f08a8a 0,#e0404a 45%,#d0303a)"></div>
<div class="t" style="left:413px;top:393.48px;font-size:3.8px;color:#6a6a6a;letter-spacing:-0.12px;letter-spacing:-0.2px">2018-09-17 08:31:45</div>
<div class="t" style="left:475px;top:393.48px;font-size:3.8px;color:#6a6a6a;letter-spacing:-0.12px;letter-spacing:-0.2px">2018-09-17 08:31:45</div>
<div class="t" style="left:537px;top:393.48px;font-size:3.8px;color:#555;letter-spacing:-0.12px;letter-spacing:-0.2px">1</div>
<div class="t" style="left:561px;top:392.76px;font-size:3.8px;color:#5a5a5a;letter-spacing:-0.12px;width:228px;overflow:hidden;line-height:1.4;letter-spacing:-0.2px">License acquisition failure details</div>
<div class="t" style="left:831px;top:393.48px;font-size:3.8px;color:#5e5e5e;letter-spacing:-0.12px;letter-spacing:-0.2px">AppPlatform</div>
<div class="t" style="left:875px;top:393.48px;font-size:3.8px;color:#5e5e5e;letter-spacing:-0.12px;letter-spacing:-0.2px">Normal</div>
<div class="t" style="left:925px;top:393.48px;font-size:3.8px;color:#3f8af2;letter-spacing:-0.12px;font-weight:bold;letter-spacing:-0.2px">Knowledge Base</div>
<div class="ab" style="left:376px;top:397.21px;width:601px;height:7.63px;background:#ffffff"></div>
<svg class="ab" style="left:392px;top:398.81px" width="5" height="5" viewBox="0 0 5 5"><path d="M0.4 0.4 H4.6 V2.2 Q4.4 4.2 2.5 4.9 Q0.6 4.2 0.4 2.2 Z" fill="#cf8a36"/><path d="M1.6 1.2 H3.4 L2.5 3.6 Z" fill="#9a5a14"/></svg>
<div class="t" style="left:413px;top:401.11px;font-size:3.8px;color:#6a6a6a;letter-spacing:-0.12px;letter-spacing:-0.2px">2018-09-17 08:25:39</div>
<div class="t" style="left:475px;top:401.11px;font-size:3.8px;color:#6a6a6a;letter-spacing:-0.12px;letter-spacing:-0.2px">2018-09-17 08:25:39</div>
<div class="t" style="left:537px;top:401.11px;font-size:3.8px;color:#555;letter-spacing:-0.12px;letter-spacing:-0.2px">1</div>
<div class="t" style="left:561px;top:400.39px;font-size:3.8px;color:#5a5a5a;letter-spacing:-0.12px;width:228px;overflow:hidden;line-height:1.4;letter-spacing:-0.2px">500 Internal Server Error</div>
<div class="t" style="left:831px;top:401.11px;font-size:3.8px;color:#5e5e5e;letter-spacing:-0.12px;letter-spacing:-0.2px">Website</div>
<div class="t" style="left:875px;top:401.11px;font-size:3.8px;color:#5e5e5e;letter-spacing:-0.12px;letter-spacing:-0.2px">Normal</div>
<div class="t" style="left:925px;top:401.11px;font-size:3.8px;color:#3f8af2;letter-spacing:-0.12px;font-weight:bold;letter-spacing:-0.2px">Knowledge Base</div>
<div class="ab" style="left:376px;top:404.84px;width:601px;height:7.63px;background:#f2f2f2"></div>
<svg class="ab" style="left:392px;top:406.44px" width="5" height="5" viewBox="0 0 5 5"><path d="M0.4 0.4 H4.6 V2.2 Q4.4 4.2 2.5 4.9 Q0.6 4.2 0.4 2.2 Z" fill="#cf8a36"/><path d="M1.6 1.2 H3.4 L2.5 3.6 Z" fill="#9a5a14"/></svg>
<div class="t" style="left:413px;top:408.74px;font-size:3.8px;color:#6a6a6a;letter-spacing:-0.12px;letter-spacing:-0.2px">2018-09-17 08:24:38</div>
<div class="t" style="left:475px;top:408.74px;font-size:3.8px;color:#6a6a6a;letter-spacing:-0.12px;letter-spacing:-0.2px">2018-09-17 08:24:38</div>
<div class="t" style="left:537px;top:408.74px;font-size:3.8px;color:#555;letter-spacing:-0.12px;letter-spacing:-0.2px">1</div>
<div class="t" style="left:561px;top:408.02px;font-size:3.8px;color:#5a5a5a;letter-spacing:-0.12px;width:228px;overflow:hidden;line-height:1.4;letter-spacing:-0.2px">400 Bad Request from Website</div>
<div class="t" style="left:794px;top:408.74px;font-size:3.8px;color:#5e5e5e;letter-spacing:-0.12px;letter-spacing:-0.2px">None</div>
<div class="t" style="left:831px;top:408.74px;font-size:3.8px;color:#5e5e5e;letter-spacing:-0.12px;letter-spacing:-0.2px">Website</div>
<div class="t" style="left:875px;top:408.74px;font-size:3.8px;color:#5e5e5e;letter-spacing:-0.12px;letter-spacing:-0.2px">Normal</div>
<div class="t" style="left:925px;top:408.74px;font-size:3.8px;color:#3f8af2;letter-spacing:-0.12px;font-weight:bold;letter-spacing:-0.2px">Knowledge Base</div>
<div class="ab" style="left:376px;top:412.47px;width:601px;height:7.63px;background:#ffffff"></div>
<div class="ab" style="left:392.1px;top:413.97px;width:4.8px;height:4.8px;border-radius:50%;background:radial-gradient(circle at 50% 45%,#f08a8a 0,#e0404a 45%,#d0303a)"></div>
<div class="t" style="left:413px;top:416.37px;font-size:3.8px;color:#6a6a6a;letter-spacing:-0.12px;letter-spacing:-0.2px">2018-09-17 08:18:53</div>
<div class="t" style="left:475px;top:416.37px;font-size:3.8px;color:#6a6a6a;letter-spacing:-0.12px;letter-spacing:-0.2px">2018-09-17 08:18:53</div>
<div class="t" style="left:537px;top:416.37px;font-size:3.8px;color:#555;letter-spacing:-0.12px;letter-spacing:-0.2px">1</div>
<div class="t" style="left:561px;top:415.65px;font-size:3.8px;color:#5a5a5a;letter-spacing:-0.12px;width:228px;overflow:hidden;line-height:1.4;letter-spacing:-0.2px">Requests for dynamic content return 404 error</div>
<div class="t" style="left:831px;top:416.37px;font-size:3.8px;color:#5e5e5e;letter-spacing:-0.12px;letter-spacing:-0.2px">Website</div>
<div class="t" style="left:875px;top:416.37px;font-size:3.8px;color:#5e5e5e;letter-spacing:-0.12px;letter-spacing:-0.2px">Normal</div>
<div class="t" style="left:925px;top:416.37px;font-size:3.8px;color:#3f8af2;letter-spacing:-0.12px;font-weight:bold;letter-spacing:-0.2px">Knowledge Base</div>
<div class="ab" style="left:376px;top:420.10px;width:601px;height:7.63px;background:#f2f2f2"></div>
<svg class="ab" style="left:392px;top:421.70px" width="5" height="5" viewBox="0 0 5 5"><path d="M2.5 0.2 L4.9 4.6 H0.1 Z" fill="#e7b62a"/><rect x="2.2" y="1.6" width="0.6" height="1.8" fill="#7a5a10"/></svg>
<div class="t" style="left:413px;top:424.00px;font-size:3.8px;color:#6a6a6a;letter-spacing:-0.12px;letter-spacing:-0.2px">2018-09-17 08:11:47</div>
<div class="t" style="left:475px;top:424.00px;font-size:3.8px;color:#6a6a6a;letter-spacing:-0.12px;letter-spacing:-0.2px">2018-09-17 08:11:47</div>
<div class="t" style="left:537px;top:424.00px;font-size:3.8px;color:#555;letter-spacing:-0.12px;letter-spacing:-0.2px">1</div>
<div class="t" style="left:561px;top:423.28px;font-size:3.8px;color:#5a5a5a;letter-spacing:-0.12px;width:228px;overflow:hidden;line-height:1.4;letter-spacing:-0.2px">File Contains No Data</div>
<div class="t" style="left:831px;top:424.00px;font-size:3.8px;color:#5e5e5e;letter-spacing:-0.12px;letter-spacing:-0.2px">Website</div>
<div class="t" style="left:875px;top:424.00px;font-size:3.8px;color:#5e5e5e;letter-spacing:-0.12px;letter-spacing:-0.2px">Normal</div>
<div class="t" style="left:925px;top:424.00px;font-size:3.8px;color:#3f8af2;letter-spacing:-0.12px;font-weight:bold;letter-spacing:-0.2px">Knowledge Base</div>
<div class="ab" style="left:376px;top:427.73px;width:601px;height:7.63px;background:#ffffff"></div>
<div class="ab" style="left:392.1px;top:429.23px;width:4.8px;height:4.8px;border-radius:50%;background:radial-gradient(circle at 50% 45%,#f08a8a 0,#e0404a 45%,#d0303a)"></div>
<div class="t" style="left:413px;top:431.63px;font-size:3.8px;color:#6a6a6a;letter-spacing:-0.12px;letter-spacing:-0.2px">2018-09-17 08:09:04</div>
<div class="t" style="left:475px;top:431.63px;font-size:3.8px;color:#6a6a6a;letter-spacing:-0.12px;letter-spacing:-0.2px">2018-09-17 08:30:04</div>
<div class="t" style="left:537px;top:431.63px;font-size:3.8px;color:#555;letter-spacing:-0.12px;letter-spacing:-0.2px">2</div>
<div class="t" style="left:561px;top:430.91px;font-size:3.8px;color:#5a5a5a;letter-spacing:-0.12px;width:228px;overflow:hidden;line-height:1.4;letter-spacing:-0.2px">Acquisition of genuine ticket failed (hr=0x80072EE7) for template id {0fb8d724-d682-4d71-863a-d8ec3f160f0f}</div>
<div class="t" style="left:794px;top:431.63px;font-size:3.8px;color:#5e5e5e;letter-spacing:-0.12px;letter-spacing:-0.2px">Availability</div>
<div class="t" style="left:831px;top:431.63px;font-size:3.8px;color:#5e5e5e;letter-spacing:-0.12px;letter-spacing:-0.2px">AppPlatform</div>
<div class="t" style="left:875px;top:431.63px;font-size:3.8px;color:#5e5e5e;letter-spacing:-0.12px;letter-spacing:-0.2px">Normal</div>
<div class="t" style="left:925px;top:431.63px;font-size:3.8px;color:#3f8af2;letter-spacing:-0.12px;font-weight:bold;letter-spacing:-0.2px">Knowledge Base</div>
<div class="ab" style="left:376px;top:435.36px;width:601px;height:7.63px;background:#f2f2f2"></div>
<div class="ab" style="left:392.1px;top:436.86px;width:4.8px;height:4.8px;border-radius:50%;background:radial-gradient(circle at 50% 45%,#f08a8a 0,#e0404a 45%,#d0303a)"></div>
<div class="t" style="left:413px;top:439.26px;font-size:3.8px;color:#6a6a6a;letter-spacing:-0.12px;letter-spacing:-0.2px">2018-09-17 08:03:39</div>
<div class="t" style="left:475px;top:439.26px;font-size:3.8px;color:#6a6a6a;letter-spacing:-0.12px;letter-spacing:-0.2px">2018-09-17 08:03:39</div>
<div class="t" style="left:537px;top:439.26px;font-size:3.8px;color:#555;letter-spacing:-0.12px;letter-spacing:-0.2px">1</div>
<div class="t" style="left:561px;top:438.54px;font-size:3.8px;color:#5a5a5a;letter-spacing:-0.12px;width:228px;overflow:hidden;line-height:1.4;letter-spacing:-0.2px">ASP generates Permission Denied errors in event log for global.asa</div>
<div class="t" style="left:831px;top:439.26px;font-size:3.8px;color:#5e5e5e;letter-spacing:-0.12px;letter-spacing:-0.2px">Website</div>
<div class="t" style="left:875px;top:439.26px;font-size:3.8px;color:#5e5e5e;letter-spacing:-0.12px;letter-spacing:-0.2px">Normal</div>
<div class="t" style="left:925px;top:439.26px;font-size:3.8px;color:#3f8af2;letter-spacing:-0.12px;font-weight:bold;letter-spacing:-0.2px">Knowledge Base</div>
<div class="ab" style="left:376px;top:442.99px;width:601px;height:7.63px;background:#ffffff"></div>
<div class="ab" style="left:392.1px;top:444.49px;width:4.8px;height:4.8px;border-radius:50%;background:radial-gradient(circle at 50% 45%,#f08a8a 0,#e0404a 45%,#d0303a)"></div>
<div class="t" style="left:413px;top:446.89px;font-size:3.8px;color:#6a6a6a;letter-spacing:-0.12px;letter-spacing:-0.2px">2018-09-17 07:59:55</div>
<div class="t" style="left:475px;top:446.89px;font-size:3.8px;color:#6a6a6a;letter-spacing:-0.12px;letter-spacing:-0.2px">2018-09-17 07:59:55</div>
<div class="t" style="left:537px;top:446.89px;font-size:3.8px;color:#555;letter-spacing:-0.12px;letter-spacing:-0.2px">1</div>
<div class="t" style="left:561px;top:446.17px;font-size:3.8px;color:#5a5a5a;letter-spacing:-0.12px;width:228px;overflow:hidden;line-height:1.4;letter-spacing:-0.2px">403 Forbidden action</div>
<div class="t" style="left:831px;top:446.89px;font-size:3.8px;color:#5e5e5e;letter-spacing:-0.12px;letter-spacing:-0.2px">Website</div>
<div class="t" style="left:875px;top:446.89px;font-size:3.8px;color:#5e5e5e;letter-spacing:-0.12px;letter-spacing:-0.2px">Normal</div>
<div class="t" style="left:925px;top:446.89px;font-size:3.8px;color:#3f8af2;letter-spacing:-0.12px;font-weight:bold;letter-spacing:-0.2px">Knowledge Base</div>
<div class="ab" style="left:376px;top:450.62px;width:601px;height:7.63px;background:#f2f2f2"></div>
<svg class="ab" style="left:392px;top:452.22px" width="5" height="5" viewBox="0 0 5 5"><path d="M0.4 0.4 H4.6 V2.2 Q4.4 4.2 2.5 4.9 Q0.6 4.2 0.4 2.2 Z" fill="#cf8a36"/><path d="M1.6 1.2 H3.4 L2.5 3.6 Z" fill="#9a5a14"/></svg>
<div class="t" style="left:413px;top:454.52px;font-size:3.8px;color:#6a6a6a;letter-spacing:-0.12px;letter-spacing:-0.2px">2018-09-17 07:52:50</div>
<div class="t" style="left:475px;top:454.52px;font-size:3.8px;color:#6a6a6a;letter-spacing:-0.12px;letter-spacing:-0.2px">2018-09-17 07:52:50</div>
<div class="t" style="left:537px;top:454.52px;font-size:3.8px;color:#555;letter-spacing:-0.12px;letter-spacing:-0.2px">1</div>
<div class="t" style="left:561px;top:453.80px;font-size:3.8px;color:#5a5a5a;letter-spacing:-0.12px;width:228px;overflow:hidden;line-height:1.4;letter-spacing:-0.2px">License acquisition failure details</div>
<div class="t" style="left:831px;top:454.52px;font-size:3.8px;color:#5e5e5e;letter-spacing:-0.12px;letter-spacing:-0.2px">AppPlatform</div>
<div class="t" style="left:875px;top:454.52px;font-size:3.8px;color:#5e5e5e;letter-spacing:-0.12px;letter-spacing:-0.2px">Normal</div>
<div class="t" style="left:925px;top:454.52px;font-size:3.8px;color:#3f8af2;letter-spacing:-0.12px;font-weight:bold;letter-spacing:-0.2px">Knowledge Base</div>
<div class="ab" style="left:376px;top:458.25px;width:601px;height:7.63px;background:#ffffff"></div>
<svg class="ab" style="left:392px;top:459.85px" width="5" height="5" viewBox="0 0 5 5"><path d="M0.4 0.4 H4.6 V2.2 Q4.4 4.2 2.5 4.9 Q0.6 4.2 0.4 2.2 Z" fill="#cf8a36"/><path d="M1.6 1.2 H3.4 L2.5 3.6 Z" fill="#9a5a14"/></svg>
<div class="t" style="left:413px;top:462.15px;font-size:3.8px;color:#6a6a6a;letter-spacing:-0.12px;letter-spacing:-0.2px">2018-09-17 07:36:34</div>
<div class="t" style="left:475px;top:462.15px;font-size:3.8px;color:#6a6a6a;letter-spacing:-0.12px;letter-spacing:-0.2px">2018-09-17 07:36:34</div>
<div class="t" style="left:537px;top:462.15px;font-size:3.8px;color:#555;letter-spacing:-0.12px;letter-spacing:-0.2px">1</div>
<div class="t" style="left:561px;top:461.43px;font-size:3.8px;color:#5a5a5a;letter-spacing:-0.12px;width:228px;overflow:hidden;line-height:1.4;letter-spacing:-0.2px">Acquisition of genuine ticket failed (hr=0x80072EE7) for template id {0fb8d724-d682-4d71-863a-d8ec3f160f0f}</div>
<div class="t" style="left:794px;top:462.15px;font-size:3.8px;color:#5e5e5e;letter-spacing:-0.12px;letter-spacing:-0.2px">Availability</div>
<div class="t" style="left:831px;top:462.15px;font-size:3.8px;color:#5e5e5e;letter-spacing:-0.12px;letter-spacing:-0.2px">AppPlatform</div>
<div class="t" style="left:875px;top:462.15px;font-size:3.8px;color:#5e5e5e;letter-spacing:-0.12px;letter-spacing:-0.2px">Normal</div>
<div class="t" style="left:925px;top:462.15px;font-size:3.8px;color:#3f8af2;letter-spacing:-0.12px;font-weight:bold;letter-spacing:-0.2px">Knowledge Base</div>
<div class="ab" style="left:376px;top:465.88px;width:601px;height:7.63px;background:#f2f2f2"></div>
<div class="ab" style="left:392px;top:467.28px;width:5px;height:5px;background:#3a8ad8"></div>
<div class="t" style="left:413px;top:469.78px;font-size:3.8px;color:#6a6a6a;letter-spacing:-0.12px;letter-spacing:-0.2px">2018-09-17 07:12:10</div>
<div class="t" style="left:475px;top:469.78px;font-size:3.8px;color:#6a6a6a;letter-spacing:-0.12px;letter-spacing:-0.2px">2018-09-17 07:12:10</div>
<div class="t" style="left:537px;top:469.78px;font-size:3.8px;color:#555;letter-spacing:-0.12px;letter-spacing:-0.2px">1</div>
<div class="t" style="left:561px;top:469.06px;font-size:3.8px;color:#5a5a5a;letter-spacing:-0.12px;width:228px;overflow:hidden;line-height:1.4;letter-spacing:-0.2px">SCOM HA Shutdown/Restart Reason</div>
<div class="t" style="left:831px;top:469.78px;font-size:3.8px;color:#5e5e5e;letter-spacing:-0.12px;letter-spacing:-0.2px">Server</div>
<div class="t" style="left:875px;top:469.78px;font-size:3.8px;color:#5e5e5e;letter-spacing:-0.12px;letter-spacing:-0.2px">Normal</div>
<div class="t" style="left:925px;top:469.78px;font-size:3.8px;color:#3f8af2;letter-spacing:-0.12px;font-weight:bold;letter-spacing:-0.2px">Knowledge Base</div>
<div class="ab" style="left:376px;top:473.51px;width:601px;height:7.63px;background:#ffffff"></div>
<div class="ab" style="left:392.1px;top:475.01px;width:4.8px;height:4.8px;border-radius:50%;background:radial-gradient(circle at 50% 45%,#f08a8a 0,#e0404a 45%,#d0303a)"></div>
<div class="t" style="left:413px;top:477.41px;font-size:3.8px;color:#6a6a6a;letter-spacing:-0.12px;letter-spacing:-0.2px">2018-09-17 07:06:25</div>
<div class="t" style="left:475px;top:477.41px;font-size:3.8px;color:#6a6a6a;letter-spacing:-0.12px;letter-spacing:-0.2px">2018-09-17 07:06:25</div>
<div class="t" style="left:537px;top:477.41px;font-size:3.8px;color:#555;letter-spacing:-0.12px;letter-spacing:-0.2px">1</div>
<div class="t" style="left:561px;top:476.69px;font-size:3.8px;color:#5a5a5a;letter-spacing:-0.12px;width:228px;overflow:hidden;line-height:1.4;letter-spacing:-0.2px">File Contains No Data</div>
<div class="t" style="left:831px;top:477.41px;font-size:3.8px;color:#5e5e5e;letter-spacing:-0.12px;letter-spacing:-0.2px">Website</div>
<div class="t" style="left:875px;top:477.41px;font-size:3.8px;color:#5e5e5e;letter-spacing:-0.12px;letter-spacing:-0.2px">Normal</div>
<div class="t" style="left:925px;top:477.41px;font-size:3.8px;color:#3f8af2;letter-spacing:-0.12px;font-weight:bold;letter-spacing:-0.2px">Knowledge Base</div>
<div class="ab" style="left:376px;top:481.14px;width:601px;height:7.63px;background:#f2f2f2"></div>
<div class="ab" style="left:392.1px;top:482.64px;width:4.8px;height:4.8px;border-radius:50%;background:radial-gradient(circle at 50% 45%,#f08a8a 0,#e0404a 45%,#d0303a)"></div>
<div class="t" style="left:413px;top:485.04px;font-size:3.8px;color:#6a6a6a;letter-spacing:-0.12px;letter-spacing:-0.2px">2018-09-17 06:52:54</div>
<div class="t" style="left:475px;top:485.04px;font-size:3.8px;color:#6a6a6a;letter-spacing:-0.12px;letter-spacing:-0.2px">2018-09-17 06:52:54</div>
<div class="t" style="left:537px;top:485.04px;font-size:3.8px;color:#555;letter-spacing:-0.12px;letter-spacing:-0.2px">1</div>
<div class="t" style="left:561px;top:484.32px;font-size:3.8px;color:#5a5a5a;letter-spacing:-0.12px;width:228px;overflow:hidden;line-height:1.4;letter-spacing:-0.2px">SCOM Run As Account Could Not Log On</div>
<div class="t" style="left:831px;top:485.04px;font-size:3.8px;color:#5e5e5e;letter-spacing:-0.12px;letter-spacing:-0.2px">Server</div>
<div class="t" style="left:875px;top:485.04px;font-size:3.8px;color:#5e5e5e;letter-spacing:-0.12px;letter-spacing:-0.2px">Normal</div>
<div class="t" style="left:925px;top:485.04px;font-size:3.8px;color:#3f8af2;letter-spacing:-0.12px;font-weight:bold;letter-spacing:-0.2px">Knowledge Base</div>
<div class="ab" style="left:376px;top:488.77px;width:601px;height:7.63px;background:#ffffff"></div>
<svg class="ab" style="left:392px;top:490.37px" width="5" height="5" viewBox="0 0 5 5"><path d="M2.5 0.2 L4.9 4.6 H0.1 Z" fill="#e7b62a"/><rect x="2.2" y="1.6" width="0.6" height="1.8" fill="#7a5a10"/></svg>
<div class="t" style="left:413px;top:492.67px;font-size:3.8px;color:#6a6a6a;letter-spacing:-0.12px;letter-spacing:-0.2px">2018-09-17 06:51:52</div>
<div class="t" style="left:475px;top:492.67px;font-size:3.8px;color:#6a6a6a;letter-spacing:-0.12px;letter-spacing:-0.2px">2018-09-17 06:51:52</div>
<div class="t" style="left:537px;top:492.67px;font-size:3.8px;color:#555;letter-spacing:-0.12px;letter-spacing:-0.2px">1</div>
<div class="t" style="left:561px;top:491.95px;font-size:3.8px;color:#5a5a5a;letter-spacing:-0.12px;width:228px;overflow:hidden;line-height:1.4;letter-spacing:-0.2px">WARNING - A Type 2 Header PCI Device Has Been Detected. The BIOS will not configure this card. It must be configured properly by the OS or ...</div>
<div class="t" style="left:831px;top:492.67px;font-size:3.8px;color:#5e5e5e;letter-spacing:-0.12px;letter-spacing:-0.2px">Server</div>
<div class="t" style="left:875px;top:492.67px;font-size:3.8px;color:#5e5e5e;letter-spacing:-0.12px;letter-spacing:-0.2px">Normal</div>
<div class="t" style="left:925px;top:492.67px;font-size:3.8px;color:#3f8af2;letter-spacing:-0.12px;font-weight:bold;letter-spacing:-0.2px">Knowledge Base</div>
<div class="ab" style="left:376px;top:496.40px;width:601px;height:7.63px;background:#f2f2f2"></div>
<div class="ab" style="left:392.1px;top:497.90px;width:4.8px;height:4.8px;border-radius:50%;background:radial-gradient(circle at 50% 45%,#f08a8a 0,#e0404a 45%,#d0303a)"></div>
<div class="t" style="left:413px;top:500.30px;font-size:3.8px;color:#6a6a6a;letter-spacing:-0.12px;letter-spacing:-0.2px">2018-09-17 06:46:28</div>
<div class="t" style="left:475px;top:500.30px;font-size:3.8px;color:#6a6a6a;letter-spacing:-0.12px;letter-spacing:-0.2px">2018-09-17 06:46:28</div>
<div class="t" style="left:537px;top:500.30px;font-size:3.8px;color:#555;letter-spacing:-0.12px;letter-spacing:-0.2px">1</div>
<div class="t" style="left:561px;top:499.58px;font-size:3.8px;color:#5a5a5a;letter-spacing:-0.12px;width:228px;overflow:hidden;line-height:1.4;letter-spacing:-0.2px">Connection Refused by Host</div>
<div class="t" style="left:794px;top:500.30px;font-size:3.8px;color:#5e5e5e;letter-spacing:-0.12px;letter-spacing:-0.2px">Security</div>
<div class="t" style="left:831px;top:500.30px;font-size:3.8px;color:#5e5e5e;letter-spacing:-0.12px;letter-spacing:-0.2px">Website</div>
<div class="t" style="left:875px;top:500.30px;font-size:3.8px;color:#5e5e5e;letter-spacing:-0.12px;letter-spacing:-0.2px">Hidden</div>
<div class="t" style="left:925px;top:500.30px;font-size:3.8px;color:#3f8af2;letter-spacing:-0.12px;font-weight:bold;letter-spacing:-0.2px">Knowledge Base</div>
<div class="ab" style="left:376px;top:504.03px;width:601px;height:7.63px;background:#ffffff"></div>
<svg class="ab" style="left:392px;top:505.63px" width="5" height="5" viewBox="0 0 5 5"><path d="M0.4 0.4 H4.6 V2.2 Q4.4 4.2 2.5 4.9 Q0.6 4.2 0.4 2.2 Z" fill="#cf8a36"/><path d="M1.6 1.2 H3.4 L2.5 3.6 Z" fill="#9a5a14"/></svg>
<div class="t" style="left:413px;top:507.93px;font-size:3.8px;color:#6a6a6a;letter-spacing:-0.12px;letter-spacing:-0.2px">2018-09-17 06:41:22</div>
<div class="t" style="left:475px;top:507.93px;font-size:3.8px;color:#6a6a6a;letter-spacing:-0.12px;letter-spacing:-0.2px">2018-09-17 06:53:55</div>
<div class="t" style="left:537px;top:507.93px;font-size:3.8px;color:#555;letter-spacing:-0.12px;letter-spacing:-0.2px">2</div>
<div class="t" style="left:561px;top:507.21px;font-size:3.8px;color:#5a5a5a;letter-spacing:-0.12px;width:228px;overflow:hidden;line-height:1.4;letter-spacing:-0.2px">501 Not Implemented function</div>
<div class="t" style="left:831px;top:507.93px;font-size:3.8px;color:#5e5e5e;letter-spacing:-0.12px;letter-spacing:-0.2px">Website</div>
<div class="t" style="left:875px;top:507.93px;font-size:3.8px;color:#5e5e5e;letter-spacing:-0.12px;letter-spacing:-0.2px">Normal</div>
<div class="t" style="left:925px;top:507.93px;font-size:3.8px;color:#3f8af2;letter-spacing:-0.12px;font-weight:bold;letter-spacing:-0.2px">Knowledge Base</div>
<div class="ab" style="left:376px;top:511.66px;width:601px;height:7.63px;background:#f2f2f2"></div>
<svg class="ab" style="left:392px;top:513.26px" width="5" height="5" viewBox="0 0 5 5"><path d="M2.5 0.2 L4.9 4.6 H0.1 Z" fill="#e7b62a"/><rect x="2.2" y="1.6" width="0.6" height="1.8" fill="#7a5a10"/></svg>
<div class="t" style="left:413px;top:515.56px;font-size:3.8px;color:#6a6a6a;letter-spacing:-0.12px;letter-spacing:-0.2px">2018-09-17 06:32:14</div>
<div class="t" style="left:475px;top:515.56px;font-size:3.8px;color:#6a6a6a;letter-spacing:-0.12px;letter-spacing:-0.2px">2018-09-17 06:32:14</div>
<div class="t" style="left:537px;top:515.56px;font-size:3.8px;color:#555;letter-spacing:-0.12px;letter-spacing:-0.2px">1</div>
<div class="t" style="left:561px;top:514.84px;font-size:3.8px;color:#5a5a5a;letter-spacing:-0.12px;width:228px;overflow:hidden;line-height:1.4;letter-spacing:-0.2px">Diskette Controller Error</div>
<div class="t" style="left:831px;top:515.56px;font-size:3.8px;color:#5e5e5e;letter-spacing:-0.12px;letter-spacing:-0.2px">Server</div>
<div class="t" style="left:875px;top:515.56px;font-size:3.8px;color:#5e5e5e;letter-spacing:-0.12px;letter-spacing:-0.2px">Normal</div>
<div class="t" style="left:925px;top:515.56px;font-size:3.8px;color:#3f8af2;letter-spacing:-0.12px;font-weight:bold;letter-spacing:-0.2px">Knowledge Base</div>
<div class="ab" style="left:376px;top:519.29px;width:601px;height:7.63px;background:#ffffff"></div>
<div class="ab" style="left:392.1px;top:520.79px;width:4.8px;height:4.8px;border-radius:50%;background:radial-gradient(circle at 50% 45%,#f08a8a 0,#e0404a 45%,#d0303a)"></div>
<div class="t" style="left:413px;top:523.19px;font-size:3.8px;color:#6a6a6a;letter-spacing:-0.12px;letter-spacing:-0.2px">2018-09-17 06:26:07</div>
<div class="t" style="left:475px;top:523.19px;font-size:3.8px;color:#6a6a6a;letter-spacing:-0.12px;letter-spacing:-0.2px">2018-09-17 06:26:07</div>
<div class="t" style="left:537px;top:523.19px;font-size:3.8px;color:#555;letter-spacing:-0.12px;letter-spacing:-0.2px">1</div>
<div class="t" style="left:561px;top:522.47px;font-size:3.8px;color:#5a5a5a;letter-spacing:-0.12px;width:228px;overflow:hidden;line-height:1.4;letter-spacing:-0.2px">License acquisition failure details</div>
<div class="t" style="left:831px;top:523.19px;font-size:3.8px;color:#5e5e5e;letter-spacing:-0.12px;letter-spacing:-0.2px">AppPlatform</div>
<div class="t" style="left:875px;top:523.19px;font-size:3.8px;color:#5e5e5e;letter-spacing:-0.12px;letter-spacing:-0.2px">Normal</div>
<div class="t" style="left:925px;top:523.19px;font-size:3.8px;color:#3f8af2;letter-spacing:-0.12px;font-weight:bold;letter-spacing:-0.2px">Knowledge Base</div>
<div class="ab" style="left:376px;top:526.92px;width:601px;height:7.63px;background:#f2f2f2"></div>
<div class="ab" style="left:392.1px;top:528.42px;width:4.8px;height:4.8px;border-radius:50%;background:radial-gradient(circle at 50% 45%,#f08a8a 0,#e0404a 45%,#d0303a)"></div>
<div class="t" style="left:413px;top:530.82px;font-size:3.8px;color:#6a6a6a;letter-spacing:-0.12px;letter-spacing:-0.2px">2018-09-17 06:23:04</div>
<div class="t" style="left:475px;top:530.82px;font-size:3.8px;color:#6a6a6a;letter-spacing:-0.12px;letter-spacing:-0.2px">2018-09-17 06:23:04</div>
<div class="t" style="left:537px;top:530.82px;font-size:3.8px;color:#555;letter-spacing:-0.12px;letter-spacing:-0.2px">1</div>
<div class="t" style="left:561px;top:530.10px;font-size:3.8px;color:#5a5a5a;letter-spacing:-0.12px;width:228px;overflow:hidden;line-height:1.4;letter-spacing:-0.2px">404 Not Found in sysMoney</div>
<div class="t" style="left:831px;top:530.82px;font-size:3.8px;color:#5e5e5e;letter-spacing:-0.12px;letter-spacing:-0.2px">Website</div>
<div class="t" style="left:875px;top:530.82px;font-size:3.8px;color:#5e5e5e;letter-spacing:-0.12px;letter-spacing:-0.2px">Normal</div>
<div class="t" style="left:925px;top:530.82px;font-size:3.8px;color:#3f8af2;letter-spacing:-0.12px;font-weight:bold;letter-spacing:-0.2px">Knowledge Base</div>
<div class="ab" style="left:376px;top:534.55px;width:601px;height:7.63px;background:#ffffff"></div>
<svg class="ab" style="left:392px;top:536.15px" width="5" height="5" viewBox="0 0 5 5"><path d="M2.5 0.2 L4.9 4.6 H0.1 Z" fill="#e7b62a"/><rect x="2.2" y="1.6" width="0.6" height="1.8" fill="#7a5a10"/></svg>
<div class="t" style="left:413px;top:538.45px;font-size:3.8px;color:#6a6a6a;letter-spacing:-0.12px;letter-spacing:-0.2px">2018-09-17 06:17:17</div>
<div class="t" style="left:475px;top:538.45px;font-size:3.8px;color:#6a6a6a;letter-spacing:-0.12px;letter-spacing:-0.2px">2018-09-17 06:17:17</div>
<div class="t" style="left:537px;top:538.45px;font-size:3.8px;color:#555;letter-spacing:-0.12px;letter-spacing:-0.2px">1</div>
<div class="t" style="left:561px;top:537.73px;font-size:3.8px;color:#5a5a5a;letter-spacing:-0.12px;width:228px;overflow:hidden;line-height:1.4;letter-spacing:-0.2px">File Contains No Data</div>
<div class="t" style="left:831px;top:538.45px;font-size:3.8px;color:#5e5e5e;letter-spacing:-0.12px;letter-spacing:-0.2px">Website</div>
<div class="t" style="left:875px;top:538.45px;font-size:3.8px;color:#5e5e5e;letter-spacing:-0.12px;letter-spacing:-0.2px">Normal</div>
<div class="t" style="left:925px;top:538.45px;font-size:3.8px;color:#3f8af2;letter-spacing:-0.12px;font-weight:bold;letter-spacing:-0.2px">Knowledge Base</div>
<div class="ab" style="left:376px;top:542.18px;width:601px;height:2.82px;background:#f2f2f2"></div>
<svg class="ab" style="left:392px;top:543.78px" width="5" height="5" viewBox="0 0 5 5"><path d="M0.4 0.4 H4.6 V2.2 Q4.4 4.2 2.5 4.9 Q0.6 4.2 0.4 2.2 Z" fill="#cf8a36"/><path d="M1.6 1.2 H3.4 L2.5 3.6 Z" fill="#9a5a14"/></svg>
<div class="t" style="left:413px;top:546.08px;font-size:3.8px;color:#6a6a6a;letter-spacing:-0.12px;letter-spacing:-0.2px">2018-09-17 06:14:11</div>
<div class="t" style="left:475px;top:546.08px;font-size:3.8px;color:#6a6a6a;letter-spacing:-0.12px;letter-spacing:-0.2px">2018-09-17 06:14:11</div>
<div class="t" style="left:537px;top:546.08px;font-size:3.8px;color:#555;letter-spacing:-0.12px;letter-spacing:-0.2px">1</div>
<div class="t" style="left:561px;top:545.36px;font-size:3.8px;color:#5a5a5a;letter-spacing:-0.12px;width:228px;overflow:hidden;line-height:1.4;letter-spacing:-0.2px">Requests for dynamic content</div>
<div class="t" style="left:831px;top:546.08px;font-size:3.8px;color:#5e5e5e;letter-spacing:-0.12px;letter-spacing:-0.2px">Website</div>
<div class="t" style="left:875px;top:546.08px;font-size:3.8px;color:#5e5e5e;letter-spacing:-0.12px;letter-spacing:-0.2px">Normal</div>
<div class="t" style="left:925px;top:546.08px;font-size:3.8px;color:#3f8af2;letter-spacing:-0.12px;font-weight:bold;letter-spacing:-0.2px">Knowledge Base</div>
</div></div>
</div></body></html>
